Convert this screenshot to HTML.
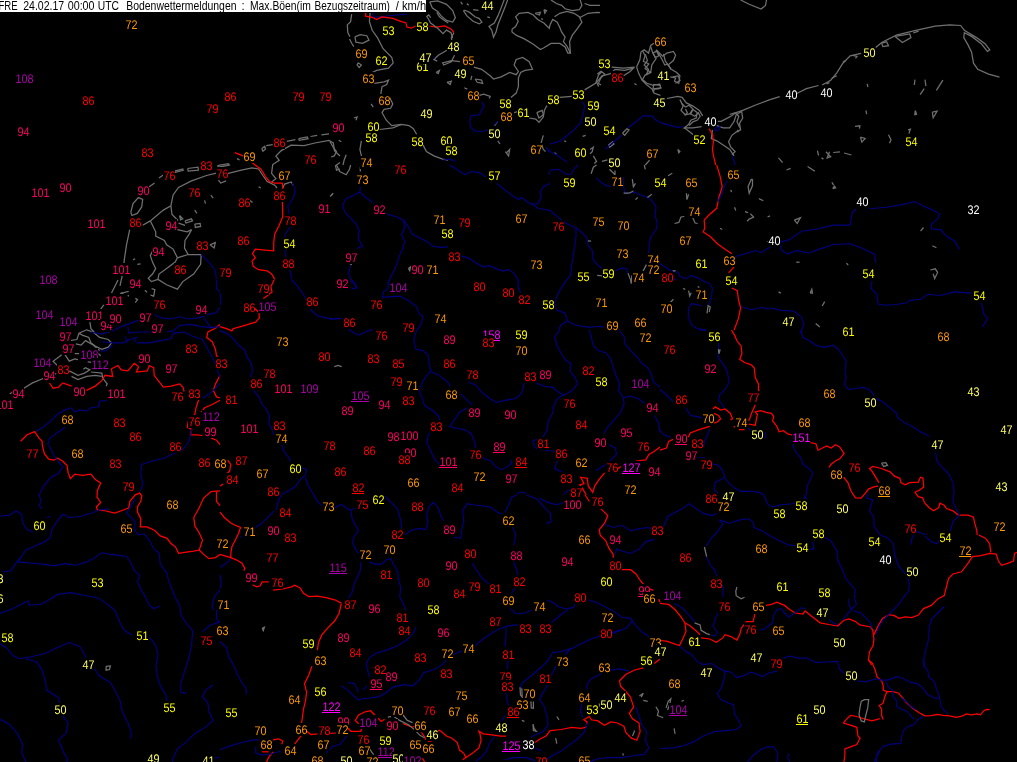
<!DOCTYPE html>
<html><head><meta charset="utf-8"><title>Bodenwettermeldungen</title>
<style>
html,body{margin:0;padding:0;background:#000;}
body{width:1017px;height:762px;overflow:hidden;position:relative;}
svg{position:absolute;left:0;top:0;display:block;will-change:transform;}
svg text{font-family:"Liberation Sans",Arial,sans-serif;font-size:12.5px;text-anchor:start;}
.c{fill:none;stroke:#707070;stroke-width:1.25;}
.b{fill:none;stroke:#ff0000;stroke-width:1.25;}
.r{fill:none;stroke:#000080;stroke-width:1.15;}
.k{fill:#000;}
</style></head><body>
<svg width="1017" height="762" viewBox="0 0 1017 762">
<rect width="1017" height="762" fill="#000"/>
<polyline class="c" points="130.8,212.3 133.0,203.6 138.4,197.6 142.7,199.3 141.7,206.9 137.3,213.4 131.9,215.5 130.8,212.3"/>
<polyline class="c" points="149.2,186.7 154.6,183.1"/>
<polyline class="c" points="159.0,178.1 163.3,175.0"/>
<polyline class="c" points="174.1,171.1 182.8,169.0 183.2,170.3 175.2,172.4 174.1,171.1"/>
<polyline class="c" points="187.6,168.5 198.0,167.2 198.4,170.1 188.2,171.1 187.6,168.5"/>
<polyline class="c" points="217.4,165.7 228.3,163.6 229.4,165.1 218.5,167.2 217.4,165.7"/>
<polyline class="c" points="236.9,158.6 239.5,159.9"/>
<polyline class="c" points="261.8,148.4 264.7,146.2 265.5,149.1 262.9,151.2 261.8,148.4"/>
<polyline class="c" points="266.2,145.6 272.7,144.7"/>
<polyline class="c" points="286.7,141.3 295.4,139.7"/>
<polyline class="c" points="298.6,138.7 307.3,136.9 308.0,138.7 299.3,140.4 298.6,138.7"/>
<polyline class="c" points="310.6,136.5 317.1,135.4"/>
<polyline class="c" points="321.4,134.8 329.0,133.9"/>
<polyline class="c" points="129.7,229.6 126.5,244.8 124.3,259.9 123.2,270.8 120.0,285.9"/>
<polyline class="c" points="142.7,225.3 150.3,220.9 163.3,210.1 170.9,205.8 173.1,195.0 178.5,187.4 191.5,180.9 206.6,175.5 215.3,173.3 228.3,173.3 241.3,170.1 252.1,167.9 258.6,169.0 262.9,175.5 267.2,181.5 274.8,185.2 277.0,188.0"/>
<polyline class="c" points="217.4,178.7 220.7,183.1 226.1,180.9"/>
<polyline class="c" points="282.8,188.0 284.6,184.1 291.1,182.0 293.2,185.2"/>
<polyline class="c" points="271.6,182.0 275.9,178.7 271.6,173.3 272.7,164.6 279.2,160.3 275.9,156.0 281.3,150.6 291.1,145.2 304.1,145.6 314.9,143.0 329.0,140.4 333.3,143.0 334.4,150.6 340.0,156.0"/>
<polyline class="c" points="340.0,162.5 335.5,165.7 336.5,170.1 340.0,169.0"/>
<polyline class="c" points="170.9,205.8 172.0,214.5 178.0,220.5"/>
<polyline class="c" points="191.5,229.6 189.3,233.9 185.0,240.4 184.5,248.0 188.2,254.5 201.2,254.5"/>
<polyline class="c" points="201.2,254.5 200.6,264.3 193.6,274.0 182.8,281.6 177.4,289.2 166.6,284.8 157.9,279.4 159.0,274.0 166.6,268.6 175.2,262.1 177.4,257.8 188.2,254.5"/>
<polyline class="c" points="150.3,220.9 155.7,231.8 155.7,236.1 164.4,240.4 166.6,244.8 173.1,249.1 177.4,257.8"/>
<polyline class="c" points="152.5,251.3 150.3,255.6 152.5,262.1 155.7,268.6 152.5,274.0 148.2,278.3 151.4,281.6 157.9,279.4"/>
<polyline class="c" points="179.5,215.5 182.8,218.8 180.6,219.9 179.5,215.5"/>
<polyline class="c" points="185.0,220.9 191.5,218.8 192.5,220.9 186.0,223.1 185.0,220.9"/>
<polyline class="c" points="194.7,224.2 200.1,223.5 200.6,226.4 195.4,227.4 194.7,224.2"/>
<polyline class="c" points="178.5,223.1 185.0,225.3"/>
<polyline class="c" points="177.4,229.6 187.1,231.8 191.5,229.6"/>
<polyline class="c" points="204.5,200.4 205.5,203.6"/>
<polyline class="c" points="210.9,195.0 213.1,198.2"/>
<polyline class="c" points="194.7,210.1 196.9,213.4"/>
<polyline class="c" points="209.9,244.8 215.3,242.6 214.2,248.0 209.9,244.8"/>
<polyline class="c" points="249.9,200.4 252.5,202.5"/>
<polyline class="c" points="258.6,186.7 260.8,188.0"/>
<polyline class="c" points="331.1,195.0 333.3,193.2"/>
<polyline class="c" points="133.0,259.9 135.2,258.8"/>
<polyline class="c" points="137.3,264.3 140.6,263.8"/>
<polyline class="c" points="120.0,293.5 128.7,291.3"/>
<polyline class="c" points="144.9,290.2 147.1,292.4"/>
<polyline class="b" points="234.8,152.7 242.3,155.6 253.2,163.6 260.8,169.0 265.5,176.6 269.4,181.5 274.8,183.1 282.4,183.1 282.8,188.5 282.4,202.5 282.8,216.6 279.2,225.3 274.8,233.9 273.7,242.6 273.7,250.8 265.1,250.2 255.3,249.1 252.5,253.4 255.3,257.8 252.1,261.0 253.2,266.4 258.6,269.7 267.2,270.8 271.6,274.0 274.8,279.4"/>
<polyline class="r" points="292.2,183.1 295.0,188.5 294.3,195.0 291.1,201.5 287.8,205.8 288.9,213.4 290.0,227.4 285.7,233.9 284.6,237.2 285.7,251.3 285.7,257.8 290.0,270.8 292.2,279.4"/>
<polyline class="r" points="201.2,254.5 206.6,259.9 210.9,264.3 215.3,270.8 216.4,279.4"/>
<polyline class="c" points="351.7,14.1 350.6,21.7 347.3,24.9 347.8,32.5 349.9,36.8"/>
<polyline class="c" points="354.9,36.8 360.3,34.6 366.8,35.7 369.0,40.1 362.5,43.3 356.0,42.2 354.9,36.8"/>
<polyline class="c" points="349.5,39.0 351.7,43.3 353.8,46.6"/>
<polyline class="c" points="358.2,62.8 361.4,65.0 359.2,67.6 357.1,65.0 358.2,62.8"/>
<polyline class="c" points="370.1,13.0 369.4,21.7 372.2,30.3 377.6,37.9 383.1,48.7 391.7,57.4 393.2,62.8 388.5,68.2 376.6,70.4 372.2,72.5"/>
<polyline class="c" points="374.4,83.4 384.1,81.9 388.5,80.1 386.7,84.5 382.0,86.6 380.9,93.1 382.0,96.4"/>
<polyline class="c" points="389.5,97.4 392.8,103.9 390.6,108.3 384.1,109.4 382.0,112.6 386.3,120.2 391.7,125.6 401.5,124.5 409.0,125.6 413.4,128.8 416.6,134.3"/>
<polyline class="c" points="379.8,129.5 392.8,127.8 401.5,124.5"/>
<polyline class="c" points="423.1,145.1 426.4,151.6 433.9,155.9 442.6,159.2 448.0,160.2"/>
<polyline class="c" points="361.4,140.8 359.9,149.4 361.4,155.9 362.5,159.2"/>
<polyline class="c" points="330.0,141.8 333.2,147.2 336.5,151.6 334.3,155.9 331.1,157.0"/>
<polyline class="c" points="346.2,154.8 344.1,160.2 343.0,165.0"/>
<polyline class="c" points="338.7,140.3 341.3,141.8"/>
<polyline class="c" points="453.9,32.5 451.3,37.9 452.3,42.2"/>
<polyline class="c" points="446.9,50.2 438.3,55.2 433.9,59.5 437.2,61.1"/>
<polyline class="c" points="454.5,55.2 451.3,61.7 443.7,65.0 442.6,62.8 451.3,60.6 459.9,61.7"/>
<polyline class="c" points="474.0,67.1 481.6,69.3 490.2,75.8 493.5,79.0 501.1,76.9 509.7,72.5 516.2,74.7 518.4,71.5 514.1,65.0 516.2,59.5 522.7,57.4 529.2,61.7 532.5,69.3 524.9,70.4 520.6,72.5 518.4,78.0 518.4,86.6 516.2,93.1 510.8,97.4"/>
<polyline class="c" points="497.8,121.3 494.6,125.6"/>
<polyline class="c" points="514.1,112.6 518.0,111.5"/>
<polyline class="c" points="529.2,118.0 535.7,119.1 539.0,122.3 543.3,116.9 544.4,110.4 546.5,106.1 550.0,103.9"/>
<polyline class="c" points="536.8,112.6 542.2,110.4 543.3,114.8 539.0,118.0 536.8,112.6"/>
<polyline class="c" points="464.3,87.7 468.6,89.9"/>
<polyline class="c" points="479.4,95.3 483.7,94.2 490.2,96.4 489.2,98.5"/>
<polyline class="c" points="471.8,75.8 470.8,80.1"/>
<polyline class="c" points="475.1,79.0 481.6,80.1 482.7,83.4 477.2,82.3 475.1,79.0"/>
<polyline class="c" points="436.1,72.5 439.4,70.4 438.3,73.6 436.1,72.5"/>
<polyline class="c" points="446.9,82.3 451.3,81.2 450.2,84.5 446.9,82.3"/>
<polyline class="c" points="543.3,135.3 541.1,142.9 543.3,149.4 545.5,151.6"/>
<polyline class="c" points="505.4,151.6 508.6,155.9 509.7,149.4 506.5,152.7"/>
<polyline class="c" points="497.8,140.8 500.0,144.0"/>
<polyline class="c" points="353.8,118.0 357.1,116.9 356.0,120.2"/>
<polyline class="c" points="371.1,103.9 373.3,107.2"/>
<polyline class="r" points="372.2,13.0 374.4,17.3 384.1,16.2 395.0,15.2 406.9,14.1"/>
<polyline class="b" points="365.7,13.0 365.7,16.2 372.2,17.3 376.6,19.5 382.0,16.9 392.8,18.4 401.5,21.7 405.8,22.7 406.9,27.1 411.2,28.2 415.5,26.0"/>
<polyline class="b" points="429.6,26.0 436.1,27.1 444.8,26.0 451.3,29.2 453.9,32.5"/>
<polyline class="r" points="481.6,101.8 484.2,106.1 481.6,110.4 479.4,114.8 470.8,115.9 469.7,121.3 470.8,127.8 475.1,131.0 481.6,131.7 488.1,129.9"/>
<polyline class="r" points="494.6,124.5 497.8,121.3"/>
<polyline class="r" points="433.9,58.5 435.0,56.7"/>
<polyline class="r" points="442.6,160.2 449.1,159.2 455.6,161.3"/>
<polyline class="r" points="546.5,147.2 548.7,151.6 550.0,149.4"/>
<polyline class="c" points="740.6,0.0 749.2,4.3 761.1,9.1 765.5,5.4 766.5,0.0"/>
<polyline class="c" points="559.7,97.4 571.7,96.4"/>
<polyline class="c" points="584.6,89.9 595.5,83.4 598.7,74.7 602.0,71.5"/>
<polyline class="c" points="611.7,67.1 623.6,68.2 634.5,67.1"/>
<polyline class="c" points="598.7,86.6 596.6,82.3 602.0,75.8 610.6,73.6 615.0,69.3 624.7,70.4 633.4,68.2"/>
<polyline class="c" points="623.6,75.8 630.1,71.5 634.5,67.1"/>
<polyline class="c" points="636.6,67.1 639.9,59.5 640.9,52.0 644.2,49.8 648.5,53.1 650.7,45.5 653.9,43.3"/>
<polyline class="c" points="656.1,49.8 662.6,56.3 666.9,53.1 673.4,51.5 675.6,55.2 673.4,60.6 668.0,65.0 671.3,69.3 676.7,72.5 679.9,75.8 678.8,83.4 674.5,81.2 675.6,78.0 670.2,76.9"/>
<polyline class="c" points="661.5,87.7 658.3,88.8 652.9,88.8 653.9,84.5 660.4,85.5"/>
<polyline class="c" points="636.6,67.1 638.8,73.6 642.0,80.1 646.4,84.5 651.8,88.8 653.9,93.1 660.4,95.3"/>
<polyline class="c" points="645.3,54.1 647.4,60.6 644.2,65.0 648.5,69.3 646.4,74.7 650.7,72.5 651.8,65.0 656.1,58.5 652.9,53.1 657.2,50.9 661.5,58.5 664.8,65.0 668.0,63.9"/>
<polyline class="c" points="666.9,98.5 677.8,96.4 682.1,97.4 686.4,102.9 692.9,106.1 699.4,110.4 702.7,115.9"/>
<polyline class="c" points="679.9,99.6 683.2,106.1 681.0,110.4 685.3,114.8 690.8,113.7 692.9,109.4 697.2,112.6 696.2,118.0 690.8,120.2 688.6,124.5 684.3,127.8 692.9,127.8 701.6,126.7"/>
<polyline class="c" points="684.3,127.8 688.6,131.0 694.0,135.3"/>
<polyline class="c" points="717.8,121.3 721.1,121.3 729.7,116.9 736.2,112.6 742.7,110.4 755.7,105.0 770.0,99.6"/>
<polyline class="c" points="716.7,125.6 723.2,127.8 729.7,127.8 734.1,121.3 736.2,114.8 741.6,111.5 742.7,118.0 739.5,123.4 740.6,129.9 736.2,132.1 731.9,135.3 728.6,141.8 730.8,147.2 735.1,151.6 731.9,154.8"/>
<polyline class="c" points="712.4,129.9 711.3,138.6 716.7,140.8 723.2,145.1 729.7,149.4 734.1,155.9"/>
<polyline class="c" points="677.8,149.4 679.9,151.6 678.8,152.7 677.8,149.4"/>
<polyline class="c" points="582.5,136.4 585.7,135.3"/>
<polyline class="c" points="564.1,140.8 566.2,141.8"/>
<polyline class="c" points="634.5,83.4 636.6,84.9"/>
<polyline class="c" points="737.3,129.9 738.4,132.1"/>
<polyline class="c" points="622.5,133.2 626.9,128.8 629.0,129.9 624.7,135.3 622.5,133.2"/>
<polyline class="c" points="608.5,145.1 612.8,141.8 613.9,144.0 609.5,147.2 608.5,145.1"/>
<polyline class="c" points="590.1,149.4 593.3,147.2 592.2,151.6 590.1,153.7"/>
<polyline class="c" points="593.3,155.9 596.6,161.3 594.4,163.5"/>
<polyline class="c" points="602.0,161.3 607.4,159.8"/>
<polyline class="c" points="554.3,152.7 556.5,153.7"/>
<polyline class="c" points="645.3,165.0 649.6,160.2"/>
<polyline class="r" points="582.5,101.8 584.6,106.1 583.6,112.6 580.3,123.4 573.8,129.9 567.3,135.3 560.8,140.8 554.3,142.9 550.0,144.0"/>
<polyline class="r" points="550.0,151.6 556.5,154.8 563.0,159.2 567.3,162.4"/>
<polyline class="r" points="605.2,149.4 615.0,140.8 621.5,135.3"/>
<polyline class="r" points="628.0,127.8 632.3,124.5 636.6,121.3 643.1,115.9 651.8,115.9 656.1,120.2 662.6,123.4 671.3,125.6 677.8,127.3 683.2,126.7"/>
<polyline class="r" points="714.6,127.8 720.0,126.7 718.9,129.9 715.7,131.0 714.6,127.8"/>
<polyline class="r" points="731.9,155.9 734.1,161.3 735.1,165.0"/>
<polyline class="b" points="709.2,128.8 712.4,134.3 713.5,140.8 712.4,149.4 713.5,155.9 715.7,165.0"/>
<polyline class="c" points="770.0,99.6 779.7,96.7"/>
<polyline class="c" points="796.7,93.5 806.4,88.7 818.6,85.5"/>
<polyline class="c" points="822.2,85.0 830.7,80.2 836.8,72.9 842.9,63.2 850.2,55.9 861.1,53.4"/>
<polyline class="c" points="875.7,47.4 881.7,42.5 896.3,35.2 915.7,30.4 935.2,26.2 949.7,25.0 960.7,25.5 964.3,30.4 976.5,37.6 985.0,43.7 989.8,49.8 987.4,51.5 981.3,43.7 971.6,36.4 964.3,32.8 963.8,37.6 968.0,44.9 971.6,52.2 973.5,63.2 977.7,69.2 988.6,74.1 999.5,77.2"/>
<polyline class="c" points="881.7,43.2 886.6,41.8 888.5,45.7 882.9,46.6 881.7,43.2"/>
<polyline class="c" points="895.1,36.4 909.7,34.0 910.9,37.6 902.4,42.5 895.1,36.4"/>
<polyline class="c" points="913.3,32.8 918.7,31.1"/>
<polyline class="c" points="852.6,55.4 857.0,56.4 855.5,58.3"/>
<polyline class="c" points="842.9,61.9 845.8,60.7"/>
<polyline class="c" points="831.9,78.2 836.8,75.8"/>
<polyline class="c" points="826.4,83.8 829.5,82.6"/>
<polyline class="c" points="867.2,83.8 867.9,87.0"/>
<polyline class="c" points="915.0,79.7 914.3,85.0"/>
<polyline class="c" points="925.0,79.7 925.9,86.2"/>
<polyline class="c" points="920.1,94.7 924.2,88.7"/>
<polyline class="c" points="936.4,90.4 942.9,80.2"/>
<polyline class="c" points="865.9,110.5 866.7,114.2"/>
<polyline class="c" points="915.3,110.5 916.5,114.2 914.8,114.6 915.3,110.5"/>
<polyline class="c" points="932.3,112.2 937.1,111.2 933.2,117.8 932.3,112.2"/>
<polyline class="c" points="855.0,126.3 859.9,125.8 859.4,128.7"/>
<polyline class="c" points="860.4,137.2 865.2,138.5 861.8,142.1 860.4,137.2"/>
<polyline class="c" points="888.5,134.8 891.0,139.7 889.5,143.3"/>
<polyline class="c" points="908.0,129.9 910.4,129.2 908.9,133.6"/>
<polyline class="c" points="817.4,150.6 818.6,155.5"/>
<polyline class="c" points="821.5,157.9 823.4,159.1"/>
<polyline class="c" points="825.9,151.8 830.7,156.7 827.1,157.9 829.5,151.8"/>
<polyline class="c" points="833.2,152.5 840.0,151.8"/>
<polyline class="c" points="844.1,153.0 851.4,155.0"/>
<polyline class="c" points="778.5,157.9 782.6,162.7"/>
<polyline class="c" points="786.5,170.0 790.6,168.3"/>
<polyline class="c" points="807.6,166.4 814.9,171.2"/>
<polyline class="c" points="831.9,182.2 833.6,185.1"/>
<polyline class="c" points="118.0,280.0 114.8,286.5 111.5,293.0"/>
<polyline class="c" points="103.9,304.9 100.7,309.2"/>
<polyline class="c" points="89.9,322.2 90.9,328.7 94.2,332.0"/>
<polyline class="c" points="69.3,340.6 76.9,339.5 79.0,333.1 86.6,329.8 93.1,332.0 99.6,337.4 108.3,339.5 111.5,342.8 108.3,347.1 101.8,349.3 95.3,346.0 90.9,342.8 88.8,337.4 82.3,335.2 79.0,333.1"/>
<polyline class="c" points="75.8,343.9 81.2,345.0 85.5,340.6 93.1,345.0 99.6,350.4"/>
<polyline class="c" points="61.7,354.7 53.1,361.2 58.5,366.6"/>
<polyline class="c" points="65.0,354.7 69.3,361.2 74.7,359.0 78.0,359.7"/>
<polyline class="c" points="74.7,353.6 79.0,353.6"/>
<polyline class="c" points="87.7,361.9 92.0,362.3"/>
<polyline class="c" points="69.3,370.9 78.0,375.3 84.5,373.1 89.9,369.9 85.5,367.7 83.4,369.2"/>
<polyline class="c" points="71.5,376.4 78.0,379.6 86.6,376.4 95.3,375.3 101.8,376.4"/>
<polyline class="c" points="90.9,372.0 101.8,373.1 102.9,378.5 107.2,383.9 106.1,386.1"/>
<polyline class="c" points="98.5,353.6 100.7,355.8"/>
<polyline class="c" points="56.3,373.5 43.3,378.5 32.5,382.9 23.8,388.3"/>
<polyline class="c" points="11.9,392.6 9.7,393.7"/>
<polyline class="c" points="151.6,288.7 154.8,289.7 153.7,296.2 150.5,295.2"/>
<polyline class="c" points="135.3,298.4 137.5,299.5 135.3,302.7"/>
<polyline class="c" points="121.3,292.6 123.4,294.1"/>
<polyline class="c" points="127.8,295.2 128.8,296.2"/>
<polyline class="b" points="49.4,382.9 53.1,388.3 58.5,387.2 62.8,382.9 71.5,386.1"/>
<polyline class="b" points="86.6,390.4 95.3,386.1 101.8,380.7 105.0,375.3 112.6,376.4 111.5,368.8 118.0,365.5 121.3,369.9 127.8,370.9 134.3,363.4 138.6,366.6 136.4,372.0 147.2,370.9 149.4,365.5 153.7,367.7 154.2,375.3 159.2,381.8 163.5,387.2 171.1,386.1 179.7,383.9 183.0,387.2 184.1,391.5"/>
<polyline class="b" points="199.2,398.0 196.0,407.8 194.9,414.3 188.4,420.8 187.3,427.2 191.6,429.4 190.6,434.8 197.1,434.8 202.5,435.5"/>
<polyline class="b" points="220.0,324.4 214.4,328.7 207.9,332.0 206.8,337.4 212.2,341.7 215.5,349.3 216.5,355.8 220.0,359.0"/>
<polyline class="b" points="220.0,375.3 215.5,383.9 213.3,390.4 216.5,396.9 220.0,398.0"/>
<polyline class="b" points="220.0,400.2 212.2,404.5 204.6,407.8 201.4,412.1"/>
<polyline class="b" points="20.6,441.3 27.1,434.8 34.6,431.6 39.0,438.1 42.2,441.3 42.2,445.0"/>
<polyline class="b" points="211.1,438.1 216.5,440.2 220.0,444.6"/>
<polyline class="r" points="216.5,280.0 216.5,288.7 220.0,291.9"/>
<polyline class="r" points="154.8,314.6 161.3,317.9 171.1,319.0 179.7,316.8 188.4,319.0 199.2,317.9 207.9,314.6 216.5,312.5 220.0,307.1"/>
<polyline class="r" points="203.6,317.9 207.9,323.3 211.1,327.6"/>
<polyline class="r" points="90.9,332.0 101.8,334.1 112.6,330.9 121.3,326.6 127.8,324.4 138.6,320.1"/>
<polyline class="r" points="127.8,326.6 128.8,333.1 138.6,332.0 151.6,332.0"/>
<polyline class="r" points="166.7,332.0 173.2,330.9 179.7,325.5 190.6,324.4 201.4,326.6 211.1,327.6 220.0,326.6"/>
<polyline class="r" points="101.8,341.7 112.6,342.8 123.4,342.8 129.9,339.5 136.4,337.4 134.3,341.7"/>
<polyline class="r" points="112.6,345.0 106.1,350.4 100.7,351.5"/>
<polyline class="r" points="125.6,336.3 126.7,341.7"/>
<polyline class="r" points="136.4,342.8 149.4,342.8 160.2,340.6 171.1,338.5 173.2,333.1 184.1,332.0 192.7,336.3 202.5,339.5 207.9,349.3 213.3,359.0 217.6,370.9 220.0,377.4"/>
<polyline class="r" points="220.0,383.9 213.3,390.4 207.9,394.8 202.5,398.0"/>
<polyline class="r" points="191.6,429.4 190.6,435.9 188.4,442.4 186.2,445.0"/>
<polyline class="r" points="107.2,400.2 99.6,401.3 98.5,406.7 90.9,407.8 86.6,411.0 80.1,409.9 74.7,412.1 71.5,407.8 65.0,409.9 57.4,414.3 50.9,420.8 43.3,427.2 35.7,431.6"/>
<polyline class="r" points="65.0,427.2 57.4,432.7 49.8,438.1 47.6,445.0"/>
<polyline class="b" points="274.1,280.0 270.9,286.5 272.0,291.9 266.6,296.2 263.3,298.4"/>
<polyline class="b" points="254.6,308.2 259.0,312.5 259.4,317.9 255.7,322.2 248.2,324.4 240.6,326.6 233.0,328.7 231.9,330.9 226.5,328.7 220.0,326.6"/>
<polyline class="r" points="220.0,330.9 226.5,333.1 233.0,338.5 238.4,345.0 244.9,350.4 247.1,356.9 251.4,363.4 252.5,370.9 250.3,377.4"/>
<polyline class="r" points="253.6,390.4 259.0,396.9 262.2,404.5 266.6,409.9 269.8,416.4 268.7,422.9 272.0,429.4 274.1,434.8"/>
<polyline class="r" points="220.0,293.0 221.1,301.7 220.0,304.9"/>
<polyline class="r" points="291.5,280.0 296.9,285.4 302.3,293.0 306.6,299.5"/>
<polyline class="r" points="309.9,309.2 317.4,315.7 326.1,317.9 334.8,319.0 342.3,318.5"/>
<polyline class="r" points="347.8,328.7 354.3,333.1 359.7,335.2 365.1,332.0 372.7,329.4"/>
<polyline class="r" points="352.1,280.0 355.3,284.3 356.4,288.2 352.5,288.7"/>
<polyline class="r" points="388.9,280.0 387.8,288.7 383.5,291.9 382.4,297.3 388.9,296.9 399.7,296.2 408.4,300.6 416.0,306.0 419.2,313.6 423.1,316.8 421.4,323.3 416.0,332.0 413.8,340.6 416.0,349.3 422.5,350.4 427.9,354.7 429.0,363.4 431.1,370.9 426.8,375.3 422.5,381.8 419.2,390.4 422.5,399.1 424.6,405.6 433.3,411.0 438.7,416.4 440.0,420.8"/>
<polyline class="r" points="431.1,372.0 436.5,374.2 440.0,375.3"/>
<polyline class="r" points="426.8,445.0 427.9,435.9 431.1,431.6"/>
<polyline class="c" points="334.3,366.6 338.0,365.5 341.7,366.6"/>
<polyline class="r" points="360.3,186.7 359.9,192.1 353.8,195.3 346.2,198.6 342.6,205.1 345.2,212.6 350.6,218.1 356.0,223.5 359.2,230.0 358.2,238.6 362.5,246.2 357.1,248.4"/>
<polyline class="r" points="350.6,265.7 348.4,273.3 351.7,281.9 356.0,285.2 356.0,288.4 351.2,288.4"/>
<polyline class="r" points="360.3,192.1 365.7,197.5 373.3,202.9"/>
<polyline class="r" points="386.3,213.7 397.1,217.0 403.6,220.2 409.0,227.8 412.3,234.3 420.9,238.6 427.4,241.9 432.9,246.2 440.4,247.3 448.0,246.9"/>
<polyline class="r" points="461.0,255.9 468.6,258.1 477.2,263.5 482.7,266.8 489.2,265.7 496.7,268.9 503.2,271.1 508.6,269.4 514.1,273.3 518.4,280.9 518.0,286.3 520.6,292.8"/>
<polyline class="r" points="403.6,220.2 404.7,227.8 401.5,234.3 404.7,241.9 402.5,249.5 399.3,255.9 397.1,263.5 393.9,271.1 390.6,277.6 387.4,284.1"/>
<polyline class="r" points="449.1,165.0 455.6,168.2 459.9,171.5 465.3,174.7 470.8,171.5 479.4,172.6 485.9,176.9"/>
<polyline class="r" points="496.7,183.4 503.2,188.8 511.9,195.3 518.4,199.6 521.6,197.5 527.1,201.8 533.6,205.1 537.9,208.3 550.0,210.5"/>
<polyline class="r" points="550.0,183.4 543.3,186.7 540.0,192.1 541.1,197.5 537.9,204.0 530.3,204.0"/>
<polyline class="r" points="548.7,171.5 550.0,174.7"/>
<polyline class="r" points="330.0,319.8 336.5,318.3 341.9,318.7"/>
<polyline class="c" points="336.5,165.0 339.7,171.5 346.2,174.7 349.5,169.3 350.6,165.0"/>
<polyline class="c" points="360.3,167.2 360.3,171.5"/>
<polyline class="c" points="330.0,196.4 332.6,194.2"/>
<polyline class="c" points="408.4,268.5 410.6,266.8 409.7,270.7 408.4,268.5"/>
<polyline class="c" points="349.9,263.5 351.7,265.0"/>
<polyline class="b" points="716.7,165.0 720.0,175.8 722.2,186.7 718.9,197.5 716.7,208.3 709.2,214.8 704.2,220.2 704.8,227.8 703.3,232.1 710.2,236.5 717.8,244.0 725.4,249.5 731.9,253.8"/>
<polyline class="b" points="734.1,266.8 728.6,272.8"/>
<polyline class="b" points="731.9,288.0 737.3,290.6 738.4,299.3 740.6,307.9 738.4,318.7 734.1,330.0"/>
<polyline class="r" points="729.7,174.7 725.4,184.5 721.1,195.3 717.8,201.8"/>
<polyline class="r" points="734.1,257.0 744.9,253.8 755.7,250.5 761.1,252.7 767.6,248.4 770.0,247.3"/>
<polyline class="r" points="741.6,306.8 751.4,309.7 761.1,307.5 770.0,309.0"/>
<polyline class="r" points="550.0,210.5 556.5,215.9 563.0,221.3 570.6,225.6 576.0,227.8 576.0,236.5 573.8,251.6 571.7,264.6 570.6,275.4 565.2,281.9 560.8,288.4 557.6,294.9 554.3,303.6 556.5,310.1 565.2,313.3 567.3,320.9 560.8,325.2 558.7,330.0"/>
<polyline class="r" points="576.0,227.8 581.4,232.1 586.8,237.5 587.9,245.1 592.2,250.5 593.3,260.3 598.7,265.7 603.1,268.9"/>
<polyline class="r" points="615.0,270.7 622.5,267.9 626.9,268.9 628.0,273.3"/>
<polyline class="r" points="550.0,170.4 558.7,169.3 565.2,173.7 570.6,174.7 573.8,169.3 578.2,165.0"/>
<polyline class="r" points="596.6,178.0 600.9,182.3 606.3,185.6 612.8,186.7"/>
<polyline class="r" points="623.6,176.9 623.6,186.7 624.7,193.2 634.5,192.1 640.9,195.3 648.5,197.5 652.9,201.8 656.1,207.2 655.0,214.8 657.2,223.5 656.1,230.0 650.7,236.5 649.2,245.1 648.5,253.8"/>
<polyline class="r" points="659.4,263.5 664.8,266.8 671.3,271.1 677.8,272.2 679.9,276.5 686.4,278.7 690.8,275.4 697.2,277.6 703.7,280.9 710.2,284.1 712.4,288.4 711.3,297.1 709.2,303.6 707.0,305.8"/>
<polyline class="r" points="701.6,305.8 691.8,303.6 688.6,307.9 688.2,316.6 691.8,325.2 697.2,328.5 705.9,330.0"/>
<polyline class="r" points="673.4,278.7 676.7,279.8"/>
<polyline class="r" points="567.3,320.9 576.0,325.2 589.0,327.4 599.8,326.3 604.1,327.4"/>
<polyline class="c" points="591.1,173.7 593.3,167.2 596.6,165.0"/>
<polyline class="c" points="609.5,169.3 615.0,174.7 615.0,170.4"/>
<polyline class="c" points="623.6,193.2 629.0,193.2 633.4,191.0"/>
<polyline class="c" points="632.3,179.1 633.4,186.7 635.5,183.4"/>
<polyline class="c" points="635.5,199.6 637.7,197.5"/>
<polyline class="c" points="647.4,197.5 651.8,194.2"/>
<polyline class="c" points="644.2,165.0 645.3,169.3"/>
<polyline class="c" points="668.0,175.8 672.3,173.2"/>
<polyline class="c" points="686.4,193.2 686.9,199.6 688.6,194.2"/>
<polyline class="c" points="674.5,223.5 678.8,222.4 681.0,217.0 684.3,216.5"/>
<polyline class="c" points="692.9,218.1 695.1,223.0 697.7,223.5"/>
<polyline class="c" points="751.4,179.1 748.1,186.7 749.2,193.2 752.5,185.6 752.5,179.7 751.4,179.1"/>
<polyline class="c" points="759.0,198.6 763.3,200.7"/>
<polyline class="c" points="734.5,207.2 735.8,210.5"/>
<polyline class="c" points="744.9,211.6 748.1,212.6"/>
<polyline class="c" points="750.3,213.7 753.6,217.0 749.2,219.1 747.1,221.3"/>
<polyline class="c" points="720.0,228.2 722.2,229.5"/>
<polyline class="c" points="730.8,189.9 731.5,192.1"/>
<polyline class="c" points="767.6,217.0 770.0,215.9"/>
<polyline class="c" points="767.6,241.9 770.0,239.7"/>
<polyline class="c" points="587.9,240.8 591.1,241.2"/>
<polyline class="c" points="597.2,275.4 602.0,275.9"/>
<polyline class="c" points="628.0,273.3 630.6,279.8 631.2,283.7 631.9,275.4"/>
<polyline class="c" points="643.1,271.1 646.4,264.6"/>
<polyline class="c" points="672.3,271.1 675.6,270.7"/>
<polyline class="c" points="683.2,288.4 685.3,289.5"/>
<polyline class="c" points="688.6,290.6 689.7,296.0 691.2,292.8"/>
<polyline class="c" points="697.7,286.7 699.4,287.3"/>
<polyline class="c" points="670.2,302.5 673.4,299.3"/>
<polyline class="c" points="707.0,313.3 708.1,305.8 710.2,306.8 709.2,312.2"/>
<polyline class="r" points="779.7,242.1 789.4,239.7 801.6,231.2 818.6,228.7 833.2,225.1 850.2,225.1 852.6,211.7 856.2,209.3"/>
<polyline class="r" points="869.6,208.8 886.6,207.3 903.6,204.4 914.5,201.5 925.5,206.9 935.2,211.2 940.0,214.1 937.6,219.0 931.5,223.9 931.5,228.7 941.2,229.9 946.1,236.0 954.6,240.9 959.5,249.4"/>
<polyline class="r" points="779.7,242.1 780.9,249.4 787.0,254.2 796.7,250.6 808.9,253.0 818.6,249.4 833.2,244.5 850.2,243.8 862.3,248.2 874.4,254.2 875.7,262.7"/>
<polyline class="r" points="872.0,280.9 870.8,288.2 876.9,294.3 878.1,304.0 884.2,305.2 896.3,304.5 907.2,302.8 909.7,300.4 920.6,299.2 927.9,294.3 940.0,295.5 954.6,291.9 971.6,293.1"/>
<polyline class="r" points="981.3,302.8 983.7,313.7 987.4,318.6 982.5,327.1"/>
<polyline class="r" points="770.0,307.7 779.7,310.1 794.3,311.3 801.6,317.4 804.0,323.5 800.4,333.2"/>
<polyline class="c" points="832.7,188.6 834.4,186.2 835.6,187.9 832.7,188.6"/>
<polyline class="c" points="794.3,220.2 800.4,217.8 797.2,223.4 794.3,220.2"/>
<polyline class="c" points="920.6,231.2 923.5,227.5"/>
<polyline class="c" points="932.3,245.7 936.4,247.7"/>
<polyline class="c" points="930.3,270.0 935.2,268.8 937.6,272.4 934.7,278.5 933.2,273.7"/>
<polyline class="c" points="796.2,262.2 799.6,262.2"/>
<polyline class="c" points="846.5,263.2 848.2,265.2"/>
<polyline class="c" points="778.5,291.9 780.9,293.1"/>
<polyline class="c" points="810.1,293.1 811.8,289.4 812.5,293.1 810.1,293.1"/>
<polyline class="c" points="822.2,306.0 824.7,301.6"/>
<polyline class="c" points="815.7,323.5 819.8,327.1 817.4,324.7"/>
<polyline class="r" points="560.2,330.0 554.8,336.5 556.9,345.2 561.3,353.8 565.6,360.3 571.0,363.6 569.9,371.1 575.3,377.6 577.5,384.1 572.1,390.6 564.5,395.0 561.3,396.0 556.9,399.3 553.7,405.8 552.6,413.4 548.3,420.9 547.2,429.6 542.9,437.2 538.5,439.4 533.1,440.4 534.2,445.9 537.4,449.1 546.1,450.2 554.8,451.3"/>
<polyline class="r" points="556.9,461.0 554.8,468.6 561.3,471.8 564.5,477.2"/>
<polyline class="r" points="569.9,489.2 565.6,492.4 563.4,495.0"/>
<polyline class="r" points="468.2,382.0 475.7,385.2 482.2,392.8 490.9,399.3 496.3,402.5 505.0,400.4 515.8,398.2 521.2,393.9 523.4,387.4 524.0,383.1"/>
<polyline class="r" points="536.4,383.1 543.9,386.3 552.6,387.4 558.0,391.7 563.4,395.0"/>
<polyline class="r" points="440.0,376.6 446.5,380.9 450.8,386.3"/>
<polyline class="r" points="460.6,393.9 467.1,400.4 472.5,404.7"/>
<polyline class="r" points="467.1,408.0 459.5,412.3 455.2,418.8 449.7,426.4 457.3,428.5 464.9,429.6 471.4,433.9 474.6,442.6 475.7,448.0"/>
<polyline class="r" points="482.2,457.8 490.9,461.0 495.2,466.4 501.7,469.7 508.2,466.4 511.5,463.2 511.0,459.9"/>
<polyline class="r" points="589.4,330.0 591.6,338.7 593.7,346.2 598.1,350.6 605.7,352.7 611.1,359.2 613.2,367.9 616.5,376.6 619.7,384.1 618.6,390.6 623.0,397.1 624.1,403.6 620.8,412.3 613.2,420.9 606.7,428.5 603.5,433.9"/>
<polyline class="r" points="608.9,444.8 615.4,448.0 616.5,454.5 611.1,459.9 604.6,465.3 599.2,468.6 595.9,470.8"/>
<polyline class="r" points="618.6,330.0 624.1,336.5 625.1,344.1 630.6,350.6 636.0,356.0 641.4,362.5 646.8,366.8 651.1,373.3 653.3,382.0 660.0,387.4"/>
<polyline class="r" points="624.1,397.6 630.6,396.0 639.2,399.3 644.6,403.6"/>
<polyline class="r" points="654.4,415.5 658.7,423.1 660.0,431.8"/>
<polyline class="r" points="516.9,493.5 522.3,492.0 526.6,493.5"/>
<polyline class="b" points="660.0,446.9 654.4,451.3 649.0,454.5 645.7,459.9 636.0,461.0"/>
<polyline class="b" points="620.8,466.4 616.5,469.7"/>
<polyline class="b" points="604.6,472.9 599.2,479.4 594.8,485.9 592.7,492.4 588.3,485.9 587.2,478.3 580.8,477.2 584.0,483.7 579.7,484.8 582.9,489.2 586.2,495.0"/>
<polyline class="b" points="731.5,330.0 734.7,335.4 736.9,340.8 741.2,346.2 741.9,353.8 739.7,359.2 744.5,362.5 750.9,364.6 754.2,367.9 755.3,377.6 758.5,384.1 758.5,391.7"/>
<polyline class="b" points="755.3,404.7 752.0,412.3 748.8,420.9"/>
<polyline class="b" points="713.1,409.0 715.2,406.9 720.6,410.1 725.0,409.0 730.4,413.4 732.5,418.8 730.4,419.9"/>
<polyline class="b" points="714.1,413.4 718.5,415.5 720.6,418.8 717.4,422.0 714.1,423.1"/>
<polyline class="b" points="748.8,424.2 755.3,425.3 756.4,418.8 757.4,414.5 755.3,411.9 760.7,410.6 766.1,412.3 771.5,413.4 773.7,416.6 772.6,420.9 776.9,426.4 779.1,431.8 783.4,430.7 787.8,433.9 792.1,435.0"/>
<polyline class="b" points="810.5,442.6 815.9,443.7 818.1,450.2 822.4,448.0 826.7,445.9 831.1,448.0 835.4,444.8 839.7,446.9 844.1,453.4 839.7,458.8 835.4,461.0 831.1,464.3 828.9,467.5"/>
<polyline class="b" points="709.8,426.4 699.0,429.6 690.3,432.9 688.2,437.2"/>
<polyline class="b" points="673.0,439.4 668.7,441.5 666.5,448.0 660.0,450.2"/>
<polyline class="b" points="739.0,429.6 744.5,429.6"/>
<polyline class="b" points="733.6,426.4 735.8,427.4"/>
<polyline class="r" points="718.5,343.0 718.5,349.5 718.0,357.1 722.8,363.6 727.1,371.1 729.3,382.0 725.0,389.5 719.5,395.0 718.5,400.4 722.8,404.7 723.9,408.0"/>
<polyline class="r" points="660.0,389.5 666.5,395.0 673.0,401.5"/>
<polyline class="r" points="686.0,408.0 690.3,415.5 697.9,416.6 703.3,418.3"/>
<polyline class="r" points="709.8,429.6 706.6,436.1 704.4,442.6 703.3,446.9"/>
<polyline class="r" points="699.0,457.8 705.5,457.8"/>
<polyline class="r" points="712.0,463.8 718.5,465.3 722.8,470.8 725.0,477.2 720.6,479.4 715.2,482.7 714.1,490.2 718.5,493.5"/>
<polyline class="r" points="725.0,478.3 729.3,483.7 734.7,488.1 741.2,491.3 750.9,491.3 759.6,492.4 763.9,495.0"/>
<polyline class="r" points="660.0,430.7 664.3,435.0 670.8,437.2"/>
<polyline class="r" points="747.7,428.5 750.9,429.6"/>
<polyline class="r" points="765.0,431.8 766.1,436.1 763.9,438.3"/>
<polyline class="r" points="800.8,330.0 802.9,337.6 809.4,340.8 815.9,345.2 824.6,347.3 833.2,345.2 838.6,349.5 843.0,356.0 846.2,361.4 845.1,371.1 846.2,378.7 844.1,384.1 848.4,389.5 856.0,388.5 863.6,387.4 869.0,389.5 873.3,393.9 874.4,397.1"/>
<polyline class="r" points="877.6,399.3 880.0,400.4"/>
<polyline class="r" points="792.1,443.7 795.3,451.3 800.8,457.8 802.9,464.3 809.4,468.6 812.7,472.9 810.5,479.4 807.2,485.9 806.2,495.0"/>
<polyline class="r" points="699.0,330.0 706.6,330.0"/>
<polyline class="c" points="718.5,349.1 718.9,353.8 720.2,349.5"/>
<polyline class="b" points="843.6,477.2 847.9,482.6 851.1,491.3 855.5,497.8 860.9,498.2 865.2,493.4 868.5,489.1 873.9,486.9 878.9,485.9"/>
<polyline class="b" points="878.9,482.6 875.0,476.1 871.7,470.7 869.5,468.5 872.8,466.4 881.5,468.5 890.1,471.8 894.4,476.1 899.9,478.3 900.9,482.6 905.3,484.8 909.6,482.6 918.3,482.2 920.4,477.2 923.0,478.3 923.7,486.9 919.3,490.2 915.0,492.3 918.3,496.7 922.6,497.8 924.8,503.2 929.1,507.5 933.4,510.8 938.8,507.5 939.9,503.2 944.2,505.3 946.4,508.6 952.9,510.8 958.3,515.1 968.1,515.1 973.5,517.2 974.6,522.7 976.7,530.2 977.2,535.0"/>
<polyline class="r" points="876.0,398.2 883.6,402.5 890.1,407.9 896.6,413.3 897.7,417.6 905.3,423.1 913.9,427.4 920.4,431.7 929.1,436.0"/>
<polyline class="r" points="935.6,452.3 936.7,460.9 942.1,467.4 948.6,473.9 952.9,482.6 954.0,491.3 952.9,502.1 957.2,510.8 959.4,515.1 952.9,521.6 950.7,530.2 949.7,535.0"/>
<polyline class="r" points="805.7,495.6 803.5,499.9"/>
<polyline class="r" points="868.5,493.4 866.3,497.8 872.8,499.9 869.5,510.8 873.9,517.2 873.9,525.9 878.2,532.4 880.4,535.0"/>
<polyline class="r" points="916.1,531.3 922.6,533.5 926.9,535.0"/>
<polyline class="c" points="881.5,463.1 885.8,462.7 887.5,465.3 883.6,466.4 881.5,463.1"/>
<polyline class="b" points="42.2,445.0 44.4,453.7 48.7,459.1 54.1,460.2 57.4,458.0 62.8,461.2 67.1,465.6 68.2,473.2 70.4,478.6 74.7,474.2 82.3,475.3 90.9,474.2 95.3,479.6 100.7,482.9 97.4,490.5 97.0,497.0 100.7,502.4 96.4,506.7 97.4,510.0 106.1,511.0 114.8,513.2 123.4,510.0 128.8,507.8 129.9,501.3 135.3,494.8 139.7,493.1 141.8,495.9 140.8,501.3 137.5,506.7 137.5,512.1 140.8,518.6 140.3,526.9 147.2,526.9 154.8,530.5 160.2,535.9 166.7,538.1 171.1,543.5 175.4,546.8 178.6,553.3 186.2,552.2 193.8,551.1 199.2,550.0"/>
<polyline class="b" points="220.0,490.9 211.1,491.6 203.6,498.1 199.2,507.8 193.8,517.5 194.9,526.2 199.2,532.7 202.5,540.3 199.2,550.0 203.6,554.4 209.0,558.7 215.5,557.6 220.0,554.4"/>
<polyline class="b" points="216.5,491.6 216.5,501.3 220.0,505.6"/>
<polyline class="r" points="186.2,445.0 181.9,450.4 173.2,453.7 164.6,458.0 151.6,461.2 141.8,464.5 140.8,473.2 142.9,484.0 139.7,491.6"/>
<polyline class="r" points="135.3,499.1 129.9,507.8 126.7,513.2 132.1,518.6 135.3,521.9 134.3,529.5 138.6,534.9 144.0,533.8 149.4,540.3 153.7,548.9 159.2,553.3 160.2,564.1 166.7,572.8 168.9,581.4 173.2,592.2 175.0,597.0"/>
<polyline class="r" points="48.7,445.0 53.1,453.7 56.3,459.1 62.8,466.7 58.5,473.2 50.9,477.5 44.4,485.1 39.0,494.8 41.1,501.3 39.0,505.6 42.2,508.9"/>
<polyline class="r" points="108.3,508.9 99.6,510.0 90.9,513.2 80.1,516.5 69.3,517.5 62.8,514.3 57.4,520.8 52.0,529.5 49.8,538.1 43.3,542.4 35.7,545.7 26.0,550.0 20.6,557.6 15.2,564.1 10.8,570.6 4.3,571.7 0.0,572.8"/>
<polyline class="r" points="20.6,557.6 18.4,561.9 30.3,563.0 43.3,564.1 54.1,565.8 65.0,563.7 75.8,565.2 86.6,561.9 95.3,557.6 101.8,552.8 110.4,554.4 119.1,555.4 126.7,556.5 131.0,563.0 134.3,570.6 139.7,574.9 137.5,581.4 140.8,589.0 145.1,596.6 149.4,605.2 153.7,608.5 160.2,606.3"/>
<polyline class="r" points="9.7,610.0 19.5,605.2 28.2,600.9 29.2,605.2 41.1,604.2 50.9,598.7 57.4,594.4 71.5,592.7 84.5,595.5 97.4,597.7 106.1,603.1 112.6,608.5 114.8,610.0"/>
<polyline class="r" points="0.0,516.0 8.7,515.4 16.2,511.0 21.7,514.3 22.7,523.0 27.1,529.5 32.5,531.6"/>
<polyline class="r" points="46.6,517.5 50.9,516.5"/>
<polyline class="r" points="220.0,590.1 214.4,596.6 212.2,605.2 213.3,610.0"/>
<polyline class="b" points="227.6,460.2 230.8,464.5 229.7,471.0 226.5,474.2"/>
<polyline class="b" points="223.2,484.0 220.0,486.1"/>
<polyline class="b" points="220.0,512.1 224.3,517.5 230.8,523.0 237.3,526.2 240.6,527.3 238.4,533.8 235.2,540.3 231.9,546.8 230.8,553.3 230.8,557.6 220.0,554.4"/>
<polyline class="b" points="230.8,557.6 236.2,559.8 241.7,563.0 244.9,568.4 243.8,570.6"/>
<polyline class="b" points="252.5,584.7 256.8,586.8 260.1,585.8 262.2,581.9 268.7,581.9"/>
<polyline class="b" points="273.1,590.1 282.8,589.0 291.5,586.8 294.7,585.3 300.1,587.9 303.4,593.3 308.8,596.6 317.4,596.1 326.1,597.7 334.8,599.8 341.3,603.1"/>
<polyline class="r" points="281.7,445.0 283.9,451.5 289.3,458.0 290.4,462.3"/>
<polyline class="r" points="301.9,467.7 306.6,469.9 305.5,475.3 300.1,479.6 295.8,486.1 289.3,490.5 282.8,493.7 279.5,498.1 277.4,504.5 276.3,510.0"/>
<polyline class="r" points="274.1,511.0 269.8,515.4 265.5,519.7 261.1,524.0 255.7,527.3"/>
<polyline class="r" points="241.7,535.9 239.5,537.0"/>
<polyline class="r" points="230.8,558.7 225.4,564.1 220.0,567.3"/>
<polyline class="r" points="305.5,477.5 307.7,485.1 313.1,493.7 317.4,501.3 321.8,505.6"/>
<polyline class="r" points="334.8,507.8 341.3,504.5 347.8,508.9 351.0,510.0 355.3,508.2"/>
<polyline class="r" points="351.0,510.0 352.1,518.6 355.3,525.1 358.6,530.5 354.3,535.9 352.5,542.4 355.3,548.9 358.6,553.3"/>
<polyline class="r" points="360.8,561.9 360.3,570.6 357.5,577.1 354.3,583.6 352.1,592.2 348.8,597.7 346.7,603.1"/>
<polyline class="r" points="384.6,495.9 391.1,502.4 397.6,508.9 399.7,516.5 401.5,524.0 400.8,530.5"/>
<polyline class="r" points="405.1,534.9 410.6,530.5 419.2,528.4 425.7,529.5 427.9,523.0 426.8,514.3 429.0,506.7 433.3,502.4 437.6,506.7 440.0,513.2"/>
<polyline class="r" points="369.4,561.9 374.8,564.1 381.3,564.1 386.7,559.8 391.1,558.7 393.2,564.1 397.6,570.6 398.6,579.3 400.8,587.9 399.7,596.6 403.0,603.1 406.2,610.0"/>
<polyline class="r" points="427.9,445.0 431.1,451.5 434.4,459.1 438.7,463.4 440.0,466.7"/>
<polyline class="r" points="220.0,574.9 221.1,583.6 220.0,589.0"/>
<polyline class="b" points="585.1,495.0 589.4,501.5"/>
<polyline class="b" points="601.3,509.1 607.8,515.6 604.6,523.2 599.2,529.6 600.2,535.1 605.7,540.5 608.9,548.1 613.2,554.5 613.2,557.8"/>
<polyline class="b" points="621.9,569.7 630.6,569.7 636.0,574.0 640.3,580.5 644.6,585.9"/>
<polyline class="b" points="647.9,588.1 653.3,590.3"/>
<polyline class="b" points="658.7,598.9 660.0,602.2"/>
<polyline class="r" points="503.9,514.5 497.4,512.3 489.8,506.9 481.1,505.8 472.5,504.7 467.1,503.7 462.7,510.2 463.8,521.0 461.7,529.6 460.6,538.3 454.1,537.2"/>
<polyline class="r" points="440.0,513.4 443.2,521.0"/>
<polyline class="r" points="505.0,512.3 509.3,503.7 511.5,497.2 516.9,495.0"/>
<polyline class="r" points="526.6,495.0 537.4,499.3 543.9,506.9 550.4,513.4 550.9,522.1 546.1,523.2"/>
<polyline class="r" points="539.6,498.2 548.3,502.6 556.9,504.7 563.4,502.6"/>
<polyline class="r" points="512.5,527.5 515.8,534.0 513.6,544.8"/>
<polyline class="r" points="513.6,562.1 516.9,569.7 518.0,575.1"/>
<polyline class="r" points="514.7,588.1 511.5,593.5"/>
<polyline class="r" points="472.5,563.2 476.8,570.8 482.2,578.4 488.7,583.8"/>
<polyline class="r" points="510.4,608.7 515.8,613.7 525.5,613.0 532.0,609.8"/>
<polyline class="r" points="547.2,600.0 552.6,602.2 558.0,606.5 565.6,608.7 573.2,607.6 575.3,604.4"/>
<polyline class="r" points="567.8,609.8 560.2,615.2 552.6,621.7 546.1,624.9 537.4,624.9"/>
<polyline class="r" points="518.0,624.9 507.1,626.0 498.5,629.3 487.6,635.8 479.0,642.2 475.7,645.5"/>
<polyline class="r" points="461.7,650.9 454.1,654.2"/>
<polyline class="r" points="506.0,626.0 506.0,635.8 505.0,646.6"/>
<polyline class="r" points="588.3,600.0 595.9,602.2 604.6,606.5 613.2,610.9 621.9,617.3 630.6,618.4 634.9,624.9 641.4,631.4 649.0,636.8 653.3,640.1"/>
<polyline class="r" points="632.7,620.6 626.2,628.2 617.6,631.4 613.2,633.6"/>
<polyline class="r" points="604.6,524.2 613.2,527.5 621.9,525.3 630.6,530.7 639.2,528.6 647.9,527.5 653.3,529.6"/>
<polyline class="r" points="654.4,539.4 645.7,541.6 639.2,549.1 630.6,553.5 623.0,551.3 616.5,549.1 615.4,554.5"/>
<polyline class="b" points="660.0,603.3 668.7,604.4 675.2,609.8 680.6,616.3 684.9,622.8 690.3,626.0 696.8,631.4 700.1,634.7"/>
<polyline class="b" points="684.9,622.8 686.0,631.4 682.7,639.0 679.5,645.5 673.0,643.3 666.5,641.2 660.0,640.5"/>
<polyline class="b" points="701.1,637.9 709.8,639.0 716.3,642.2 722.8,637.9 725.0,634.7 731.5,636.8 736.9,640.1 740.1,633.6 741.2,628.2 745.5,622.8"/>
<polyline class="b" points="745.5,621.7 753.1,621.7 754.8,614.1"/>
<polyline class="b" points="766.1,605.4 771.5,604.4 776.9,602.2 784.5,605.4 789.9,609.8 795.3,613.0 802.9,614.1 805.1,610.9 811.6,616.3 820.2,622.8 828.9,624.5 837.6,626.0"/>
<polyline class="r" points="660.0,530.7 664.3,525.3 667.6,516.7 673.0,513.4 681.7,509.1 689.2,503.7 696.8,509.1 703.3,513.4 712.0,515.6 716.7,513.4"/>
<polyline class="r" points="719.5,519.9 722.8,524.2 717.4,531.8 710.9,538.3 706.6,545.9"/>
<polyline class="r" points="706.6,556.7 709.8,564.3 715.2,570.8 716.7,576.2"/>
<polyline class="r" points="723.2,584.9 722.8,596.8"/>
<polyline class="r" points="718.5,611.9 715.2,618.4 713.1,626.0 717.4,632.5 715.2,635.8 710.9,635.3"/>
<polyline class="r" points="719.5,519.9 729.3,523.2 740.1,519.9 748.8,518.8 753.1,522.1 754.2,527.5 761.8,530.7 770.4,536.1 779.1,540.5 787.8,544.8 796.4,545.9"/>
<polyline class="r" points="809.4,549.1 813.7,549.1 812.7,541.6"/>
<polyline class="r" points="763.9,495.0 767.2,503.7 772.6,506.9 781.3,504.7 792.1,503.7 795.3,502.6"/>
<polyline class="r" points="804.0,495.0 807.2,499.3"/>
<polyline class="r" points="674.1,603.3 681.7,607.6 688.2,614.1 694.6,621.7"/>
<polyline class="r" points="759.6,630.3 763.9,629.3 768.3,626.0 772.6,622.8 773.7,615.2 776.9,609.8 781.3,608.7 784.5,613.0 788.8,617.3 796.4,611.9 801.8,607.6 805.1,608.7"/>
<polyline class="r" points="828.9,619.5 833.2,622.8 839.7,626.0"/>
<polyline class="c" points="704.4,547.0 705.9,553.5 706.6,556.7"/>
<polyline class="c" points="736.9,587.0 735.8,591.4 736.2,595.7 741.2,598.9 744.5,597.2"/>
<polyline class="c" points="694.6,622.8 700.1,624.9 701.1,630.3 706.6,633.6 709.8,634.7"/>
<polyline class="b" points="837.3,626.2 843.6,620.5 849.0,619.0 855.5,621.6 859.8,624.9 870.6,627.0 872.8,630.3 873.9,638.9 873.2,645.4 869.5,651.9 868.5,659.5 871.7,664.9"/>
<polyline class="b" points="873.9,634.6 878.2,625.9 882.5,618.4 889.0,614.7 894.4,615.6 898.8,618.4 905.3,616.9 911.8,617.7 918.3,615.1 923.7,608.6 931.3,605.4 937.8,598.9 944.2,595.6 946.4,587.0 948.6,578.3 952.9,574.0 961.6,571.8 968.1,563.2 972.4,556.7 981.1,555.6 989.7,553.4 996.2,554.1 998.4,561.0 1001.6,565.3 1008.1,563.2 1013.5,561.0 1014.6,553.4 1017.0,552.3"/>
<polyline class="b" points="978.9,535.0 985.4,538.2 989.7,543.7 990.8,552.3"/>
<polyline class="r" points="880.4,535.0 887.9,538.2 893.4,543.7 894.4,552.3 896.6,561.0 898.8,566.4 905.3,574.0"/>
<polyline class="r" points="907.4,577.2 909.6,583.7 908.5,591.3 903.1,597.8 898.8,604.3 890.1,613.0 883.6,619.5 879.3,625.9 876.0,634.6"/>
<polyline class="r" points="824.1,537.2 830.6,540.4 837.1,551.2 838.1,561.0 842.5,569.6 845.7,578.3 851.1,584.8 855.5,590.2 854.4,597.8 856.5,604.3 851.1,609.7 849.0,604.3 848.5,598.9"/>
<polyline class="r" points="851.1,609.7 845.7,616.2 842.5,620.5"/>
<polyline class="r" points="853.3,610.8 860.9,613.0 866.3,618.4 870.6,622.7 871.7,628.1"/>
<polyline class="r" points="944.2,606.5 937.8,613.0 931.3,619.5 929.1,628.1 928.7,638.9 925.8,649.8 923.7,659.5 924.8,667.1"/>
<polyline class="r" points="910.7,544.7 911.8,539.3 913.9,535.0"/>
<polyline class="r" points="924.8,536.1 931.3,541.5 936.7,543.7 939.9,539.3"/>
<polyline class="r" points="0.0,613.2 9.7,610.0"/>
<polyline class="r" points="114.8,610.0 120.2,623.0 124.5,630.6 132.1,634.9"/>
<polyline class="r" points="149.4,637.1 155.9,645.7 158.1,655.5 155.9,666.3 158.1,679.3 161.3,687.9 165.7,694.4 166.7,700.9"/>
<polyline class="r" points="0.0,643.6 6.5,647.9 13.0,655.5 19.5,658.7 32.5,656.5 45.5,653.3 56.3,647.9 69.3,642.5 80.1,646.8 84.5,654.4 86.6,658.7"/>
<polyline class="r" points="94.2,668.5 99.6,676.0 110.4,682.5 115.9,692.3 120.2,700.9 122.3,711.8 127.8,722.6 131.0,731.3 131.0,738.8"/>
<polyline class="r" points="26.0,658.7 36.8,662.0 42.2,670.6 45.5,681.5 46.6,690.1 55.2,695.5 58.5,697.7 59.5,703.1"/>
<polyline class="r" points="62.8,716.1 68.2,722.6 66.0,733.4 58.5,739.9 62.8,750.7 67.1,758.3 67.1,762.0"/>
<polyline class="r" points="0.0,719.3 8.7,723.7 17.3,733.4 22.7,744.2 21.7,752.9 26.0,762.0"/>
<polyline class="r" points="175.0,597.0 179.7,605.7 180.8,614.3 186.2,623.0 192.7,630.6 191.6,644.6 188.4,659.8 184.1,672.8 180.8,683.6 180.8,692.3 186.2,693.4"/>
<polyline class="r" points="213.3,684.7 205.7,690.1 202.5,696.6 207.9,703.1 209.0,711.8 213.3,720.4 205.7,726.9 194.9,733.4 186.2,742.1 177.6,748.6 173.2,758.3 172.2,762.0"/>
<polyline class="r" points="220.0,621.9 210.0,625.2 202.5,631.6"/>
<polyline class="r" points="213.3,758.3 220.0,757.2"/>
<polyline class="r" points="216.5,610.0 216.5,618.7 220.0,623.0"/>
<polyline class="c" points="106.1,666.3 110.4,665.9 109.4,669.5 106.1,670.2 106.1,666.3"/>
<polyline class="b" points="341.3,603.5 339.1,613.2 334.8,620.8 328.3,627.3 321.8,634.9 318.5,642.5 317.4,650.1"/>
<polyline class="b" points="312.0,666.3 308.8,675.0 304.5,683.6 306.6,692.3 305.5,700.9 303.4,709.6 302.3,718.3 301.2,724.8"/>
<polyline class="b" points="306.6,731.3 310.9,734.5 317.4,733.9"/>
<polyline class="b" points="330.4,733.4 335.9,733.0"/>
<polyline class="b" points="347.8,728.0 351.0,731.3 360.8,731.3 361.8,728.0"/>
<polyline class="b" points="358.6,723.7 355.3,720.4 358.6,715.0 365.1,711.8 370.5,710.7 374.8,715.0"/>
<polyline class="b" points="378.1,718.3 381.3,721.5 384.6,719.3"/>
<polyline class="b" points="301.2,735.6 296.9,741.0 294.7,744.2"/>
<polyline class="b" points="273.1,739.9 278.5,738.8 282.8,741.0 281.7,744.2"/>
<polyline class="b" points="262.2,751.8 268.7,751.8"/>
<polyline class="b" points="273.1,751.8 268.7,757.2 266.6,762.0"/>
<polyline class="b" points="403.0,723.7 410.6,726.5 414.9,726.9"/>
<polyline class="b" points="421.4,732.3 424.6,736.7 425.7,739.9"/>
<polyline class="b" points="427.9,741.7 432.2,742.1"/>
<polyline class="b" points="422.5,758.3 424.6,762.0"/>
<polyline class="b" points="436.5,731.3 440.0,730.2"/>
<polyline class="r" points="220.0,641.4 226.5,647.9 228.7,656.5 233.0,664.1 237.3,673.9 241.7,682.5 246.0,687.9 246.4,694.4"/>
<polyline class="r" points="416.0,627.3 412.7,633.8 406.2,640.3 397.6,645.7 386.7,650.1 375.9,653.3 369.4,657.6 366.2,664.1 368.3,672.8 369.4,677.1"/>
<polyline class="r" points="362.9,690.1 367.2,685.8"/>
<polyline class="r" points="341.3,685.8 347.8,690.1 353.2,695.5 358.6,699.9 362.9,698.8 371.6,697.7 379.2,696.6 386.7,692.3 393.2,686.9 404.1,684.7 412.7,685.8 419.2,680.4 423.6,672.8 434.4,669.5 440.0,666.3"/>
<polyline class="r" points="347.8,682.5 354.3,683.6 358.6,692.3"/>
<polyline class="r" points="220.0,749.7 228.7,746.4 239.5,743.2 252.5,739.9 259.0,739.9"/>
<polyline class="r" points="255.7,746.4 255.7,752.9 261.1,755.1 270.9,754.0 278.5,751.8 280.6,750.7"/>
<polyline class="r" points="326.1,752.9 332.6,746.4 340.2,744.2 344.5,738.8 346.7,735.6"/>
<polyline class="c" points="262.2,628.4 264.4,627.3 263.3,630.6 262.2,628.4"/>
<polyline class="c" points="387.8,717.2 393.2,716.1 399.7,720.4 408.4,724.8 413.8,729.1 420.3,735.6 424.6,737.8"/>
<polyline class="c" points="403.0,715.0 407.3,720.4 412.7,722.6"/>
<polyline class="c" points="369.4,748.6 371.6,751.8 373.7,754.6"/>
<polyline class="c" points="342.3,754.6 343.9,756.2"/>
<polyline class="b" points="440.0,730.6 446.5,736.0 451.9,738.2 457.3,742.5 459.5,750.1 463.8,753.3 466.0,757.6 462.7,759.8"/>
<polyline class="b" points="466.0,757.6 472.4,753.3 478.9,747.9 481.1,740.3 480.0,733.8 478.9,731.2 483.3,733.8 491.9,734.9 500.6,736.0 506.0,736.0"/>
<polyline class="b" points="535.2,742.5 539.5,739.2 546.0,736.0 550.3,730.6 561.1,729.5 571.9,727.3 580.6,728.4 586.0,727.3 587.1,721.9 583.8,719.8 589.3,716.5 591.4,719.8 597.9,720.9 604.4,725.2 610.9,721.9 617.4,723.0 623.9,726.3 626.0,732.7 631.4,738.2 636.8,740.3 640.1,731.7 639.0,723.0 632.5,718.7 629.3,713.3 633.6,706.8 630.4,697.1 626.0,691.6 620.6,686.2 619.5,680.8 626.0,674.3 634.7,670.0 643.3,667.9"/>
<polyline class="b" points="654.1,663.5 659.8,659.2"/>
<polyline class="r" points="454.1,653.8 447.6,659.2 442.2,664.6 440.0,665.7"/>
<polyline class="r" points="508.1,660.3 507.5,668.9"/>
<polyline class="r" points="506.0,692.7 507.1,701.4 509.2,705.7"/>
<polyline class="r" points="504.9,715.4 501.6,720.9"/>
<polyline class="r" points="495.2,736.0 489.8,742.5 486.5,751.1 481.1,757.6 475.7,760.9"/>
<polyline class="r" points="619.5,630.0 610.9,633.2 602.2,635.4 591.4,638.7 582.8,643.0 571.9,648.4 561.1,651.6 552.5,652.7 548.2,660.3 541.7,666.8 535.2,672.2 527.6,678.7 522.2,683.0 520.0,689.5"/>
<polyline class="r" points="569.8,649.5 556.8,664.6 551.4,675.4"/>
<polyline class="r" points="548.2,684.1 541.7,694.9 539.5,699.2 543.8,705.7 547.1,716.5 548.2,725.2 542.7,731.7 535.2,734.9 530.9,737.1"/>
<polyline class="r" points="535.2,747.9 541.7,751.1"/>
<polyline class="r" points="629.3,671.1 619.5,668.9 610.9,670.0 600.1,674.3 591.4,678.7 587.1,684.1 587.1,689.5"/>
<polyline class="r" points="581.7,703.5 580.6,712.2 582.8,717.6"/>
<polyline class="r" points="587.1,723.0 584.9,731.7 578.4,738.2 569.8,744.6 561.1,751.1 552.5,755.5 546.0,759.8"/>
<polyline class="r" points="635.8,706.8 639.0,716.5 642.2,725.2 646.6,731.7 645.5,740.3 648.7,747.9 644.4,754.4 634.7,755.5 621.7,757.6 608.7,757.6 597.9,758.7 589.3,761.9"/>
<polyline class="r" points="504.9,759.8 513.5,757.6 526.5,757.6 535.2,760.9"/>
<polyline class="c" points="520.0,687.3 520.5,694.9 522.2,697.1 521.8,688.4"/>
<polyline class="c" points="530.9,701.4 531.3,707.9 533.4,708.3 533.4,701.4"/>
<polyline class="c" points="521.8,720.4 524.4,721.3"/>
<polyline class="c" points="533.0,724.1 533.4,730.6 536.3,731.2 534.1,728.4 533.0,724.1"/>
<polyline class="c" points="556.8,716.5 559.0,719.8"/>
<polyline class="c" points="555.7,738.2 556.8,743.6"/>
<polyline class="c" points="639.4,696.0 643.3,693.2 641.2,697.1"/>
<polyline class="c" points="643.3,700.3 647.7,701.4"/>
<polyline class="c" points="655.9,706.8 658.5,711.1 657.4,715.4 659.8,716.5"/>
<polyline class="c" points="632.5,736.0 634.7,730.6"/>
<polyline class="c" points="622.8,753.3 623.4,755.5"/>
<polyline class="c" points="599.0,703.5 600.1,706.8"/>
<polyline class="b" points="879.8,718.7 872.0,720.9 863.3,718.7 856.8,716.5 850.4,715.4 846.0,719.8 843.4,723.0 850.4,725.2 856.8,727.3 857.9,736.0 860.1,738.2 856.8,744.6 850.4,746.8 844.9,749.0 844.9,755.5 843.9,761.9"/>
<polyline class="r" points="679.5,646.2 686.0,651.6 692.4,654.9 696.8,661.4 703.3,664.6 711.9,663.5 718.4,667.9 724.9,671.1 731.4,672.2 736.8,677.6 744.4,675.4 750.9,672.2 757.3,674.3 762.7,676.5 768.2,673.3 776.8,671.1"/>
<polyline class="r" points="783.3,658.1 789.8,656.0 798.4,658.1 807.1,658.1 815.7,662.4 826.6,662.0 837.4,661.4 839.5,668.9 843.9,673.3"/>
<polyline class="r" points="856.8,680.8 865.5,681.9 876.3,678.7"/>
<polyline class="r" points="724.9,671.1 723.8,679.8 721.6,687.3 717.3,693.8 720.6,699.2 727.1,702.5 733.5,704.6 734.6,714.4 739.0,720.9 741.1,726.3 735.7,729.5 724.9,730.6 714.1,731.7 703.3,736.0 694.6,741.4 683.8,745.7 673.0,747.9 660.0,748.5"/>
<polyline class="r" points="747.6,761.9 753.0,755.5 761.7,749.0 768.2,746.8 773.6,746.8 777.9,753.3 776.8,761.9"/>
<polyline class="r" points="788.7,753.3 787.6,757.6 789.8,761.9"/>
<polyline class="r" points="879.8,751.1 876.3,757.6 876.3,761.9"/>
<polyline class="c" points="861.2,701.4 864.4,699.7 868.7,699.7 867.7,707.9 865.5,716.5 864.4,721.9 861.2,720.9 859.0,714.4 860.1,706.8 861.2,701.4"/>
<polyline class="c" points="666.1,707.9 668.2,701.4 670.8,698.8 669.7,704.6 667.6,710.0"/>
<polyline class="c" points="681.6,701.4 683.8,700.3"/>
<polyline class="c" points="660.0,716.5 663.2,717.6"/>
<polyline class="c" points="674.1,728.4 675.1,733.8"/>
<polyline class="b" points="868.5,660.0 872.3,663.1 875.4,670.8 877.0,677.0 881.6,680.8 883.2,685.5 883.2,690.1 887.0,691.6 893.2,691.6 898.6,693.2 902.5,697.8 906.3,702.5 912.5,707.9 918.7,712.5 924.8,715.9 931.0,715.6 937.2,714.3 943.4,715.3 949.5,715.9 956.5,717.4 962.7,715.9 966.5,714.0 971.1,714.8 977.3,714.0 980.4,714.8 983.5,710.9 986.6,709.4 989.7,709.7"/>
<polyline class="b" points="887.0,691.6 884.7,697.0 883.2,703.2 879.3,705.5 881.6,709.4 881.6,715.6 883.2,719.4"/>
<polyline class="r" points="875.4,678.5 881.6,680.1 887.8,680.1 897.0,676.7 903.2,678.5 910.9,682.4 917.9,683.9 923.3,688.6 927.9,694.7 934.1,697.8 938.7,698.6"/>
<polyline class="r" points="923.3,660.0 924.1,666.2 927.9,670.8 928.7,677.0 934.1,681.6 937.2,690.9 939.5,697.0 941.0,706.3 944.9,710.9 948.0,714.3"/>
<polyline class="r" points="886.2,681.6 887.8,686.2 892.4,690.1 893.2,696.3 897.0,701.7 896.3,706.3 901.7,709.4 906.3,710.9 910.2,714.8 914.0,719.4"/>
<polyline class="r" points="900.9,697.8 906.3,701.7 910.9,706.3 915.6,709.4"/>
<polyline class="r" points="923.3,716.3 917.9,719.4 914.0,724.8 907.9,726.4 903.2,731.0 901.7,737.2 900.9,743.4 890.9,744.1 883.2,746.4 877.8,752.6 874.7,762.0"/>
<polyline class="c" points="429.7,1.8 437.7,0.9 446.5,4.4 452.7,10.6 455.4,17.7 452.7,22.1 446.5,20.4 441.2,15.9 437.7,11.5 432.4,8.0 429.7,1.8"/>
<polyline class="c" points="436.8,12.4 439.5,16.8 443.0,19.5 448.3,23.0"/>
<polyline class="c" points="427.1,16.8 430.6,23.0 437.7,28.3 443.0,33.6 446.5,30.1 451.0,32.7 452.7,38.1"/>
<polyline class="c" points="426.2,16.8 428.8,15.0 430.6,17.7"/>
<polyline class="c" points="463.4,10.6 466.9,15.9 473.1,21.2 479.3,23.9 481.9,22.1 479.3,18.6 474.9,16.8 469.6,12.4 465.1,10.3 463.4,10.6"/>
<polyline class="c" points="473.1,9.7 478.4,10.3"/>
<polyline class="c" points="460.7,1.8 462.5,4.4"/>
<polyline class="c" points="466.9,3.5 468.7,5.3"/>
<polyline class="c" points="487.3,16.8 489.9,17.7"/>
<polyline class="c" points="504.1,0.0 501.4,7.1 497.9,15.9 494.3,23.0 489.0,26.5 491.7,30.1 493.5,37.2 496.1,31.9 497.9,24.8 501.4,15.9 505.0,7.1 507.6,0.0"/>
<polyline class="c" points="512.0,29.2 515.6,26.5 518.2,21.2 515.6,16.8 519.1,13.3 528.0,12.4 533.3,15.0 537.7,19.5 543.9,23.0 549.2,28.3 550.1,24.8 552.7,19.5 557.2,22.1 559.8,27.4 561.6,31.9 565.1,37.2 563.4,41.6 566.9,46.0 570.4,53.1 567.8,53.1 565.1,46.9 559.8,43.4 551.0,43.4 543.9,47.8 540.4,49.6 533.3,44.2 524.4,38.9 516.5,35.4 512.0,31.9 512.0,29.2"/>
<polyline class="c" points="554.5,16.8 559.8,13.3 566.9,11.5 574.0,13.3 579.3,16.8 581.9,22.1 577.5,28.3 572.2,35.4 569.6,41.6 570.4,53.1"/>
<polyline class="c" points="579.3,17.7 588.1,13.3 597.0,12.4 600.0,12.7"/>
<polyline class="c" points="551.0,0.0 556.3,3.5 561.6,5.3 565.1,8.8 572.2,10.6 579.3,9.7 581.9,5.3 580.2,0.0"/>
<polyline class="c" points="584.6,3.5 589.9,5.3 600.0,5.3"/>
<polyline class="c" points="535.0,13.3 540.4,12.4 539.5,15.0 535.0,13.3"/>
<polyline class="c" points="543.9,9.7 546.5,10.6 544.8,13.3 543.9,9.7"/>
<polyline class="c" points="541.2,18.6 543.0,19.5"/>
<polyline class="c" points="642.4,50.2 645.1,55.7 643.3,61.2 648.8,64.0 645.1,68.6 650.6,72.2 645.1,75.0 642.4,79.6 646.9,83.3 652.5,85.1 659.8,84.2 660.7,87.9 654.3,88.8 653.4,92.5"/>
<polyline class="c" points="650.6,46.5 652.5,52.0 655.2,57.6 658.9,55.7 656.1,50.2"/>
<polyline class="c" points="663.5,53.9 665.3,61.2 669.0,65.8 670.8,69.5"/>
<polyline class="c" points="672.7,76.8 678.2,75.9 680.0,80.5 675.4,83.3"/>
<polyline class="c" points="681.8,103.5 685.5,107.1 689.2,105.3 692.9,109.0 690.1,113.6 694.7,116.3 698.4,112.7 700.2,116.3 697.5,120.0 692.9,121.8 689.2,125.5"/>
<polyline class="c" points="685.5,109.0 687.4,112.7 684.6,115.4"/>
<polyline class="c" points="597.3,74.1 601.0,71.3 604.7,74.1 601.0,77.8 598.3,83.3 601.0,85.1"/>
<polyline class="c" points="729.6,114.5 735.1,112.7 738.8,116.3 737.0,121.8 739.7,127.4"/>
<g text-rendering="geometricPrecision" shape-rendering="crispEdges" style="opacity:0.999">
<rect class="k" x="125" y="18" width="12" height="13"/><text transform="translate(125.5,29) scale(0.863,1)" fill="#ff9900">72</text>
<rect class="k" x="15" y="72" width="18" height="13"/><text transform="translate(15.5,83) scale(0.863,1)" fill="#aa00aa">108</text>
<rect class="k" x="82" y="94" width="12" height="13"/><text transform="translate(82.5,105) scale(0.863,1)" fill="#ff0000">86</text>
<rect class="k" x="224" y="90" width="12" height="13"/><text transform="translate(224.5,101) scale(0.863,1)" fill="#ff0000">86</text>
<rect class="k" x="206" y="102" width="12" height="13"/><text transform="translate(206.5,113) scale(0.863,1)" fill="#ff0000">79</text>
<rect class="k" x="292" y="90" width="12" height="13"/><text transform="translate(292.5,101) scale(0.863,1)" fill="#ff0000">79</text>
<rect class="k" x="319" y="90" width="12" height="13"/><text transform="translate(319.5,101) scale(0.863,1)" fill="#ff0000">79</text>
<rect class="k" x="17" y="125" width="12" height="13"/><text transform="translate(17.5,136) scale(0.863,1)" fill="#ff0066">94</text>
<rect class="k" x="332" y="121" width="12" height="13"/><text transform="translate(332.5,132) scale(0.863,1)" fill="#ff0066">90</text>
<rect class="k" x="141" y="146" width="12" height="13"/><text transform="translate(141.5,157) scale(0.863,1)" fill="#ff0000">83</text>
<rect class="k" x="273" y="136" width="12" height="13"/><text transform="translate(273.5,147) scale(0.863,1)" fill="#ff0000">86</text>
<rect class="k" x="243" y="150" width="12" height="13"/><text transform="translate(243.5,161) scale(0.863,1)" fill="#ff9900">69</text>
<rect class="k" x="304" y="153" width="12" height="13"/><text transform="translate(304.5,164) scale(0.863,1)" fill="#ff0000">76</text>
<rect class="k" x="200" y="159" width="12" height="13"/><text transform="translate(200.5,170) scale(0.863,1)" fill="#ff0000">83</text>
<rect class="k" x="163" y="169" width="12" height="13"/><text transform="translate(163.5,180) scale(0.863,1)" fill="#ff0000">76</text>
<rect class="k" x="216" y="167" width="12" height="13"/><text transform="translate(216.5,178) scale(0.863,1)" fill="#ff0000">76</text>
<rect class="k" x="278" y="169" width="12" height="13"/><text transform="translate(278.5,180) scale(0.863,1)" fill="#ff9900">67</text>
<rect class="k" x="31" y="186" width="18" height="13"/><text transform="translate(31.5,197) scale(0.863,1)" fill="#ff0066">101</text>
<rect class="k" x="59" y="181" width="12" height="13"/><text transform="translate(59.5,192) scale(0.863,1)" fill="#ff0066">90</text>
<rect class="k" x="137" y="184" width="12" height="13"/><text transform="translate(137.5,195) scale(0.863,1)" fill="#ff0066">90</text>
<rect class="k" x="188" y="186" width="12" height="13"/><text transform="translate(188.5,197) scale(0.863,1)" fill="#ff0000">76</text>
<rect class="k" x="273" y="189" width="12" height="13"/><text transform="translate(273.5,200) scale(0.863,1)" fill="#ff0000">86</text>
<rect class="k" x="238" y="196" width="12" height="13"/><text transform="translate(238.5,207) scale(0.863,1)" fill="#ff0000">86</text>
<rect class="k" x="318" y="202" width="12" height="13"/><text transform="translate(318.5,213) scale(0.863,1)" fill="#ff0066">91</text>
<rect class="k" x="87" y="217" width="18" height="13"/><text transform="translate(87.5,228) scale(0.863,1)" fill="#ff0066">101</text>
<rect class="k" x="129" y="216" width="12" height="13"/><text transform="translate(129.5,227) scale(0.863,1)" fill="#ff0000">86</text>
<rect class="k" x="165" y="219" width="12" height="13"/><text transform="translate(165.5,230) scale(0.863,1)" fill="#ff0066">94</text>
<rect class="k" x="284" y="214" width="12" height="13"/><text transform="translate(284.5,225) scale(0.863,1)" fill="#ff0000">78</text>
<rect class="k" x="237" y="234" width="12" height="13"/><text transform="translate(237.5,245) scale(0.863,1)" fill="#ff0000">86</text>
<rect class="k" x="196" y="239" width="12" height="13"/><text transform="translate(196.5,250) scale(0.863,1)" fill="#ff0000">83</text>
<rect class="k" x="283" y="237" width="12" height="13"/><text transform="translate(283.5,248) scale(0.863,1)" fill="#ffff00">54</text>
<rect class="k" x="152" y="245" width="12" height="13"/><text transform="translate(152.5,256) scale(0.863,1)" fill="#ff0066">94</text>
<rect class="k" x="481" y="-1" width="12" height="13"/><text transform="translate(481.5,10) scale(0.863,1)" fill="#ffff66">44</text>
<rect class="k" x="382" y="24" width="12" height="13"/><text transform="translate(382.5,35) scale(0.863,1)" fill="#ffff00">53</text>
<rect class="k" x="416" y="20" width="12" height="13"/><text transform="translate(416.5,31) scale(0.863,1)" fill="#ffff00">58</text>
<rect class="k" x="447" y="40" width="12" height="13"/><text transform="translate(447.5,51) scale(0.863,1)" fill="#ffff66">48</text>
<rect class="k" x="355" y="47" width="12" height="13"/><text transform="translate(355.5,58) scale(0.863,1)" fill="#ff9900">69</text>
<rect class="k" x="375" y="54" width="12" height="13"/><text transform="translate(375.5,65) scale(0.863,1)" fill="#ffff00">62</text>
<rect class="k" x="416" y="60" width="12" height="13"/><text transform="translate(416.5,71) scale(0.863,1)" fill="#ffff00">61</text>
<rect class="k" x="419" y="51" width="12" height="13"/><text transform="translate(419.5,62) scale(0.863,1)" fill="#ffff66">47</text>
<rect class="k" x="462" y="54" width="12" height="13"/><text transform="translate(462.5,65) scale(0.863,1)" fill="#ff9900">65</text>
<rect class="k" x="454" y="67" width="12" height="13"/><text transform="translate(454.5,78) scale(0.863,1)" fill="#ffff66">49</text>
<rect class="k" x="362" y="72" width="12" height="13"/><text transform="translate(362.5,83) scale(0.863,1)" fill="#ff9900">63</text>
<rect class="k" x="378" y="94" width="12" height="13"/><text transform="translate(378.5,105) scale(0.863,1)" fill="#ff9900">68</text>
<rect class="k" x="467" y="89" width="12" height="13"/><text transform="translate(467.5,100) scale(0.863,1)" fill="#ff9900">68</text>
<rect class="k" x="420" y="107" width="12" height="13"/><text transform="translate(420.5,118) scale(0.863,1)" fill="#ffff66">49</text>
<rect class="k" x="499" y="97" width="12" height="13"/><text transform="translate(499.5,108) scale(0.863,1)" fill="#ffff00">58</text>
<rect class="k" x="517" y="106" width="12" height="13"/><text transform="translate(517.5,117) scale(0.863,1)" fill="#ffff00">61</text>
<rect class="k" x="500" y="110" width="12" height="13"/><text transform="translate(500.5,121) scale(0.863,1)" fill="#ff9900">68</text>
<rect class="k" x="547" y="93" width="12" height="13"/><text transform="translate(547.5,104) scale(0.863,1)" fill="#ffff00">58</text>
<rect class="k" x="572" y="88" width="12" height="13"/><text transform="translate(572.5,99) scale(0.863,1)" fill="#ffff00">53</text>
<rect class="k" x="598" y="57" width="12" height="13"/><text transform="translate(598.5,68) scale(0.863,1)" fill="#ffff00">53</text>
<rect class="k" x="611" y="71" width="12" height="13"/><text transform="translate(611.5,82) scale(0.863,1)" fill="#ff0000">86</text>
<rect class="k" x="654" y="35" width="12" height="13"/><text transform="translate(654.5,46) scale(0.863,1)" fill="#ff9900">66</text>
<rect class="k" x="657" y="69" width="12" height="13"/><text transform="translate(657.5,80) scale(0.863,1)" fill="#ffff66">41</text>
<rect class="k" x="653" y="96" width="12" height="13"/><text transform="translate(653.5,107) scale(0.863,1)" fill="#ffff66">45</text>
<rect class="k" x="587" y="99" width="12" height="13"/><text transform="translate(587.5,110) scale(0.863,1)" fill="#ffff00">59</text>
<rect class="k" x="584" y="115" width="12" height="13"/><text transform="translate(584.5,126) scale(0.863,1)" fill="#ffff66">50</text>
<rect class="k" x="603" y="124" width="12" height="13"/><text transform="translate(603.5,135) scale(0.863,1)" fill="#ffff00">54</text>
<rect class="k" x="367" y="120" width="12" height="13"/><text transform="translate(367.5,131) scale(0.863,1)" fill="#ffff00">60</text>
<rect class="k" x="365" y="131" width="12" height="13"/><text transform="translate(365.5,142) scale(0.863,1)" fill="#ffff00">58</text>
<rect class="k" x="411" y="135" width="12" height="13"/><text transform="translate(411.5,146) scale(0.863,1)" fill="#ffff00">58</text>
<rect class="k" x="440" y="134" width="12" height="13"/><text transform="translate(440.5,145) scale(0.863,1)" fill="#ffff00">60</text>
<rect class="k" x="445" y="144" width="12" height="13"/><text transform="translate(445.5,155) scale(0.863,1)" fill="#ffff00">58</text>
<rect class="k" x="488" y="127" width="12" height="13"/><text transform="translate(488.5,138) scale(0.863,1)" fill="#ffff66">50</text>
<rect class="k" x="530" y="143" width="12" height="13"/><text transform="translate(530.5,154) scale(0.863,1)" fill="#ff9900">67</text>
<rect class="k" x="574" y="146" width="12" height="13"/><text transform="translate(574.5,157) scale(0.863,1)" fill="#ffff00">60</text>
<rect class="k" x="646" y="147" width="12" height="13"/><text transform="translate(646.5,158) scale(0.863,1)" fill="#ff9900">67</text>
<rect class="k" x="608" y="156" width="12" height="13"/><text transform="translate(608.5,167) scale(0.863,1)" fill="#ffff66">50</text>
<rect class="k" x="360" y="156" width="12" height="13"/><text transform="translate(360.5,167) scale(0.863,1)" fill="#ff9900">74</text>
<rect class="k" x="356" y="173" width="12" height="13"/><text transform="translate(356.5,184) scale(0.863,1)" fill="#ff9900">73</text>
<rect class="k" x="394" y="163" width="12" height="13"/><text transform="translate(394.5,174) scale(0.863,1)" fill="#ff0000">76</text>
<rect class="k" x="488" y="169" width="12" height="13"/><text transform="translate(488.5,180) scale(0.863,1)" fill="#ffff00">57</text>
<rect class="k" x="563" y="176" width="12" height="13"/><text transform="translate(563.5,187) scale(0.863,1)" fill="#ffff00">59</text>
<rect class="k" x="611" y="175" width="12" height="13"/><text transform="translate(611.5,186) scale(0.863,1)" fill="#ff9900">71</text>
<rect class="k" x="654" y="176" width="12" height="13"/><text transform="translate(654.5,187) scale(0.863,1)" fill="#ffff00">54</text>
<rect class="k" x="373" y="203" width="12" height="13"/><text transform="translate(373.5,214) scale(0.863,1)" fill="#ff0066">92</text>
<rect class="k" x="433" y="213" width="12" height="13"/><text transform="translate(433.5,224) scale(0.863,1)" fill="#ff9900">71</text>
<rect class="k" x="458" y="216" width="12" height="13"/><text transform="translate(458.5,227) scale(0.863,1)" fill="#ff0000">79</text>
<rect class="k" x="441" y="227" width="12" height="13"/><text transform="translate(441.5,238) scale(0.863,1)" fill="#ffff00">58</text>
<rect class="k" x="515" y="212" width="12" height="13"/><text transform="translate(515.5,223) scale(0.863,1)" fill="#ff9900">67</text>
<rect class="k" x="552" y="220" width="12" height="13"/><text transform="translate(552.5,231) scale(0.863,1)" fill="#ff0000">76</text>
<rect class="k" x="592" y="215" width="12" height="13"/><text transform="translate(592.5,226) scale(0.863,1)" fill="#ff9900">75</text>
<rect class="k" x="617" y="219" width="12" height="13"/><text transform="translate(617.5,230) scale(0.863,1)" fill="#ff9900">70</text>
<rect class="k" x="616" y="247" width="12" height="13"/><text transform="translate(616.5,258) scale(0.863,1)" fill="#ff9900">73</text>
<rect class="k" x="345" y="251" width="12" height="13"/><text transform="translate(345.5,262) scale(0.863,1)" fill="#ff0066">97</text>
<rect class="k" x="448" y="250" width="12" height="13"/><text transform="translate(448.5,261) scale(0.863,1)" fill="#ff0000">83</text>
<rect class="k" x="684" y="81" width="12" height="13"/><text transform="translate(684.5,92) scale(0.863,1)" fill="#ff9900">63</text>
<rect class="k" x="863" y="46" width="12" height="13"/><text transform="translate(863.5,57) scale(0.863,1)" fill="#ffff66">50</text>
<rect class="k" x="785" y="88" width="12" height="13"/><text transform="translate(785.5,99) scale(0.863,1)" fill="#ffffff">40</text>
<rect class="k" x="820" y="86" width="12" height="13"/><text transform="translate(820.5,97) scale(0.863,1)" fill="#ffffff">40</text>
<rect class="k" x="704" y="115" width="12" height="13"/><text transform="translate(704.5,126) scale(0.863,1)" fill="#ffffff">40</text>
<rect class="k" x="693" y="133" width="12" height="13"/><text transform="translate(693.5,144) scale(0.863,1)" fill="#ffff00">52</text>
<rect class="k" x="905" y="135" width="12" height="13"/><text transform="translate(905.5,146) scale(0.863,1)" fill="#ffff00">54</text>
<rect class="k" x="727" y="168" width="12" height="13"/><text transform="translate(727.5,179) scale(0.863,1)" fill="#ff9900">65</text>
<rect class="k" x="685" y="176" width="12" height="13"/><text transform="translate(685.5,187) scale(0.863,1)" fill="#ff9900">65</text>
<rect class="k" x="688" y="205" width="12" height="13"/><text transform="translate(688.5,216) scale(0.863,1)" fill="#ff9900">74</text>
<rect class="k" x="679" y="234" width="12" height="13"/><text transform="translate(679.5,245) scale(0.863,1)" fill="#ff9900">67</text>
<rect class="k" x="856" y="195" width="12" height="13"/><text transform="translate(856.5,206) scale(0.863,1)" fill="#ffffff">40</text>
<rect class="k" x="967" y="203" width="12" height="13"/><text transform="translate(967.5,214) scale(0.863,1)" fill="#ffffff">32</text>
<rect class="k" x="768" y="234" width="12" height="13"/><text transform="translate(768.5,245) scale(0.863,1)" fill="#ffffff">40</text>
<rect class="k" x="112" y="263" width="18" height="13"/><text transform="translate(112.5,274) scale(0.863,1)" fill="#ff0066">101</text>
<rect class="k" x="174" y="263" width="12" height="13"/><text transform="translate(174.5,274) scale(0.863,1)" fill="#ff0000">86</text>
<rect class="k" x="219" y="266" width="12" height="13"/><text transform="translate(219.5,277) scale(0.863,1)" fill="#ff0000">79</text>
<rect class="k" x="282" y="257" width="12" height="13"/><text transform="translate(282.5,268) scale(0.863,1)" fill="#ff0000">88</text>
<rect class="k" x="39" y="273" width="18" height="13"/><text transform="translate(39.5,284) scale(0.863,1)" fill="#aa00aa">108</text>
<rect class="k" x="129" y="277" width="12" height="13"/><text transform="translate(129.5,288) scale(0.863,1)" fill="#ff0066">94</text>
<rect class="k" x="257" y="282" width="12" height="13"/><text transform="translate(257.5,293) scale(0.863,1)" fill="#ff0000">79</text>
<rect class="k" x="105" y="294" width="18" height="13"/><text transform="translate(105.5,305) scale(0.863,1)" fill="#ff0066">101</text>
<rect class="k" x="153" y="298" width="12" height="13"/><text transform="translate(153.5,309) scale(0.863,1)" fill="#ff0000">76</text>
<rect class="k" x="195" y="303" width="12" height="13"/><text transform="translate(195.5,314) scale(0.863,1)" fill="#ff0066">94</text>
<rect class="k" x="243" y="301" width="12" height="13"/><text transform="translate(243.5,312) scale(0.863,1)" fill="#ff0000">86</text>
<rect class="k" x="258" y="300" width="18" height="13"/><text transform="translate(258.5,311) scale(0.863,1)" fill="#aa00aa">105</text>
<rect class="k" x="306" y="295" width="12" height="13"/><text transform="translate(306.5,306) scale(0.863,1)" fill="#ff0000">86</text>
<rect class="k" x="35" y="308" width="18" height="13"/><text transform="translate(35.5,319) scale(0.863,1)" fill="#aa00aa">104</text>
<rect class="k" x="59" y="315" width="18" height="13"/><text transform="translate(59.5,326) scale(0.863,1)" fill="#aa00aa">104</text>
<rect class="k" x="85" y="309" width="18" height="13"/><text transform="translate(85.5,320) scale(0.863,1)" fill="#ff0066">101</text>
<rect class="k" x="100" y="319" width="12" height="13"/><text transform="translate(100.5,330) scale(0.863,1)" fill="#ff0066">94</text>
<rect class="k" x="109" y="312" width="12" height="13"/><text transform="translate(109.5,323) scale(0.863,1)" fill="#ff0066">90</text>
<rect class="k" x="139" y="311" width="12" height="13"/><text transform="translate(139.5,322) scale(0.863,1)" fill="#ff0066">97</text>
<rect class="k" x="151" y="322" width="12" height="13"/><text transform="translate(151.5,333) scale(0.863,1)" fill="#ff0066">97</text>
<rect class="k" x="59" y="330" width="12" height="13"/><text transform="translate(59.5,341) scale(0.863,1)" fill="#ff0066">97</text>
<rect class="k" x="62" y="342" width="12" height="13"/><text transform="translate(62.5,353) scale(0.863,1)" fill="#ff0066">97</text>
<rect class="k" x="80" y="348" width="18" height="13"/><text transform="translate(80.5,359) scale(0.863,1)" fill="#aa00aa">108</text>
<rect class="k" x="185" y="342" width="12" height="13"/><text transform="translate(185.5,353) scale(0.863,1)" fill="#ff0000">83</text>
<rect class="k" x="276" y="335" width="12" height="13"/><text transform="translate(276.5,346) scale(0.863,1)" fill="#ff9900">73</text>
<rect class="k" x="318" y="350" width="12" height="13"/><text transform="translate(318.5,361) scale(0.863,1)" fill="#ff0000">80</text>
<rect class="k" x="33" y="356" width="18" height="13"/><text transform="translate(33.5,367) scale(0.863,1)" fill="#aa00aa">104</text>
<rect class="k" x="91" y="358" width="18" height="13"/><text transform="translate(91.5,369) scale(0.863,1)" fill="#aa00aa">112</text>
<rect class="k" x="57" y="363" width="12" height="13"/><text transform="translate(57.5,374) scale(0.863,1)" fill="#ff0000">83</text>
<rect class="k" x="43" y="369" width="12" height="13"/><text transform="translate(43.5,380) scale(0.863,1)" fill="#ff0066">94</text>
<rect class="k" x="138" y="352" width="12" height="13"/><text transform="translate(138.5,363) scale(0.863,1)" fill="#ff0066">90</text>
<rect class="k" x="165" y="362" width="12" height="13"/><text transform="translate(165.5,373) scale(0.863,1)" fill="#ff0066">97</text>
<rect class="k" x="215" y="357" width="12" height="13"/><text transform="translate(215.5,368) scale(0.863,1)" fill="#ff0000">83</text>
<rect class="k" x="263" y="367" width="12" height="13"/><text transform="translate(263.5,378) scale(0.863,1)" fill="#ff0000">78</text>
<rect class="k" x="250" y="377" width="12" height="13"/><text transform="translate(250.5,388) scale(0.863,1)" fill="#ff0000">86</text>
<rect class="k" x="274" y="382" width="18" height="13"/><text transform="translate(274.5,393) scale(0.863,1)" fill="#ff0066">101</text>
<rect class="k" x="300" y="382" width="18" height="13"/><text transform="translate(300.5,393) scale(0.863,1)" fill="#aa00aa">109</text>
<rect class="k" x="12" y="387" width="12" height="13"/><text transform="translate(12.5,398) scale(0.863,1)" fill="#ff0066">94</text>
<rect class="k" x="-5" y="398" width="18" height="13"/><text transform="translate(-4.5,409) scale(0.863,1)" fill="#ff0066">101</text>
<rect class="k" x="73" y="385" width="12" height="13"/><text transform="translate(73.5,396) scale(0.863,1)" fill="#ff0066">90</text>
<rect class="k" x="107" y="387" width="18" height="13"/><text transform="translate(107.5,398) scale(0.863,1)" fill="#ff0066">101</text>
<rect class="k" x="171" y="390" width="12" height="13"/><text transform="translate(171.5,401) scale(0.863,1)" fill="#ff0000">76</text>
<rect class="k" x="188" y="387" width="12" height="13"/><text transform="translate(188.5,398) scale(0.863,1)" fill="#ff0000">83</text>
<rect class="k" x="225" y="393" width="12" height="13"/><text transform="translate(225.5,404) scale(0.863,1)" fill="#ff0000">81</text>
<rect class="k" x="61" y="413" width="12" height="13"/><text transform="translate(61.5,424) scale(0.863,1)" fill="#ff9900">68</text>
<rect class="k" x="113" y="416" width="12" height="13"/><text transform="translate(113.5,427) scale(0.863,1)" fill="#ff0000">83</text>
<rect class="k" x="202" y="410" width="18" height="13"/><text transform="translate(202.5,421) scale(0.863,1)" fill="#aa00aa">112</text>
<rect class="k" x="188" y="415" width="12" height="13"/><text transform="translate(188.5,426) scale(0.863,1)" fill="#ff0000">76</text>
<rect class="k" x="204" y="425" width="12" height="13"/><text transform="translate(204.5,436) scale(0.863,1)" fill="#ff0066">99</text>
<rect class="k" x="240" y="422" width="18" height="13"/><text transform="translate(240.5,433) scale(0.863,1)" fill="#ff0066">101</text>
<rect class="k" x="273" y="419" width="12" height="13"/><text transform="translate(273.5,430) scale(0.863,1)" fill="#ff0000">83</text>
<rect class="k" x="275" y="432" width="12" height="13"/><text transform="translate(275.5,443) scale(0.863,1)" fill="#ff9900">74</text>
<rect class="k" x="129" y="430" width="12" height="13"/><text transform="translate(129.5,441) scale(0.863,1)" fill="#ff0000">86</text>
<rect class="k" x="169" y="440" width="12" height="13"/><text transform="translate(169.5,451) scale(0.863,1)" fill="#ff0000">86</text>
<rect class="k" x="323" y="439" width="12" height="13"/><text transform="translate(323.5,450) scale(0.863,1)" fill="#ff0000">78</text>
<rect class="k" x="26" y="447" width="12" height="13"/><text transform="translate(26.5,458) scale(0.863,1)" fill="#ff0000">77</text>
<rect class="k" x="71" y="447" width="12" height="13"/><text transform="translate(71.5,458) scale(0.863,1)" fill="#ff9900">68</text>
<rect class="k" x="109" y="457" width="12" height="13"/><text transform="translate(109.5,468) scale(0.863,1)" fill="#ff0000">83</text>
<rect class="k" x="198" y="456" width="12" height="13"/><text transform="translate(198.5,467) scale(0.863,1)" fill="#ff0000">86</text>
<rect class="k" x="214" y="457" width="12" height="13"/><text transform="translate(214.5,468) scale(0.863,1)" fill="#ff9900">68</text>
<rect class="k" x="235" y="454" width="12" height="13"/><text transform="translate(235.5,465) scale(0.863,1)" fill="#ff0000">87</text>
<rect class="k" x="289" y="462" width="12" height="13"/><text transform="translate(289.5,473) scale(0.863,1)" fill="#ffff00">60</text>
<rect class="k" x="256" y="467" width="12" height="13"/><text transform="translate(256.5,478) scale(0.863,1)" fill="#ff9900">67</text>
<rect class="k" x="226" y="473" width="12" height="13"/><text transform="translate(226.5,484) scale(0.863,1)" fill="#ff0000">84</text>
<rect class="k" x="334" y="465" width="12" height="13"/><text transform="translate(334.5,476) scale(0.863,1)" fill="#ff0000">86</text>
<rect class="k" x="122" y="480" width="12" height="13"/><text transform="translate(122.5,491) scale(0.863,1)" fill="#ff0000">79</text>
<rect class="k" x="267" y="485" width="12" height="13"/><text transform="translate(267.5,496) scale(0.863,1)" fill="#ff0000">86</text>
<rect class="k" x="166" y="498" width="12" height="13"/><text transform="translate(166.5,509) scale(0.863,1)" fill="#ff9900">68</text>
<rect class="k" x="322" y="500" width="12" height="13"/><text transform="translate(322.5,511) scale(0.863,1)" fill="#ff9900">73</text>
<rect class="k" x="336" y="277" width="12" height="13"/><text transform="translate(336.5,288) scale(0.863,1)" fill="#ff0066">92</text>
<rect class="k" x="530" y="258" width="12" height="13"/><text transform="translate(530.5,269) scale(0.863,1)" fill="#ff9900">73</text>
<rect class="k" x="647" y="253" width="12" height="13"/><text transform="translate(647.5,264) scale(0.863,1)" fill="#ff9900">74</text>
<rect class="k" x="647" y="263" width="12" height="13"/><text transform="translate(647.5,274) scale(0.863,1)" fill="#ff9900">72</text>
<rect class="k" x="411" y="263" width="12" height="13"/><text transform="translate(411.5,274) scale(0.863,1)" fill="#ff0066">90</text>
<rect class="k" x="426" y="263" width="12" height="13"/><text transform="translate(426.5,274) scale(0.863,1)" fill="#ff9900">71</text>
<rect class="k" x="577" y="270" width="12" height="13"/><text transform="translate(577.5,281) scale(0.863,1)" fill="#ffff00">55</text>
<rect class="k" x="602" y="267" width="12" height="13"/><text transform="translate(602.5,278) scale(0.863,1)" fill="#ffff00">59</text>
<rect class="k" x="632" y="271" width="12" height="13"/><text transform="translate(632.5,282) scale(0.863,1)" fill="#ff9900">74</text>
<rect class="k" x="661" y="271" width="12" height="13"/><text transform="translate(661.5,282) scale(0.863,1)" fill="#ff0000">80</text>
<rect class="k" x="389" y="281" width="18" height="13"/><text transform="translate(389.5,292) scale(0.863,1)" fill="#aa00aa">104</text>
<rect class="k" x="473" y="280" width="12" height="13"/><text transform="translate(473.5,291) scale(0.863,1)" fill="#ff0000">80</text>
<rect class="k" x="502" y="286" width="12" height="13"/><text transform="translate(502.5,297) scale(0.863,1)" fill="#ff0000">80</text>
<rect class="k" x="518" y="293" width="12" height="13"/><text transform="translate(518.5,304) scale(0.863,1)" fill="#ff0000">82</text>
<rect class="k" x="542" y="298" width="12" height="13"/><text transform="translate(542.5,309) scale(0.863,1)" fill="#ffff00">58</text>
<rect class="k" x="595" y="296" width="12" height="13"/><text transform="translate(595.5,307) scale(0.863,1)" fill="#ff9900">71</text>
<rect class="k" x="660" y="302" width="12" height="13"/><text transform="translate(660.5,313) scale(0.863,1)" fill="#ff9900">70</text>
<rect class="k" x="370" y="298" width="12" height="13"/><text transform="translate(370.5,309) scale(0.863,1)" fill="#ff0000">76</text>
<rect class="k" x="343" y="316" width="12" height="13"/><text transform="translate(343.5,327) scale(0.863,1)" fill="#ff0000">86</text>
<rect class="k" x="434" y="312" width="12" height="13"/><text transform="translate(434.5,323) scale(0.863,1)" fill="#ff9900">74</text>
<rect class="k" x="402" y="321" width="12" height="13"/><text transform="translate(402.5,332) scale(0.863,1)" fill="#ff0000">79</text>
<rect class="k" x="375" y="329" width="12" height="13"/><text transform="translate(375.5,340) scale(0.863,1)" fill="#ff0000">76</text>
<rect class="k" x="443" y="333" width="12" height="13"/><text transform="translate(443.5,344) scale(0.863,1)" fill="#ff0066">89</text>
<rect class="k" x="482" y="328" width="18" height="13"/><text transform="translate(482.5,339) scale(0.863,1)" fill="#ff00ff">158</text><rect x="482" y="340" width="18" height="1" fill="#ff00ff"/>
<rect class="k" x="482" y="336" width="12" height="13"/><text transform="translate(482.5,347) scale(0.863,1)" fill="#ff0000">83</text>
<rect class="k" x="515" y="328" width="12" height="13"/><text transform="translate(515.5,339) scale(0.863,1)" fill="#ffff00">59</text>
<rect class="k" x="515" y="344" width="12" height="13"/><text transform="translate(515.5,355) scale(0.863,1)" fill="#ff9900">70</text>
<rect class="k" x="606" y="319" width="12" height="13"/><text transform="translate(606.5,330) scale(0.863,1)" fill="#ff9900">69</text>
<rect class="k" x="634" y="316" width="12" height="13"/><text transform="translate(634.5,327) scale(0.863,1)" fill="#ff9900">66</text>
<rect class="k" x="639" y="331" width="12" height="13"/><text transform="translate(639.5,342) scale(0.863,1)" fill="#ff9900">72</text>
<rect class="k" x="663" y="343" width="12" height="13"/><text transform="translate(663.5,354) scale(0.863,1)" fill="#ff0000">76</text>
<rect class="k" x="367" y="352" width="12" height="13"/><text transform="translate(367.5,363) scale(0.863,1)" fill="#ff0000">83</text>
<rect class="k" x="392" y="357" width="12" height="13"/><text transform="translate(392.5,368) scale(0.863,1)" fill="#ff0000">85</text>
<rect class="k" x="443" y="357" width="12" height="13"/><text transform="translate(443.5,368) scale(0.863,1)" fill="#ff0000">86</text>
<rect class="k" x="466" y="368" width="12" height="13"/><text transform="translate(466.5,379) scale(0.863,1)" fill="#ff0000">78</text>
<rect class="k" x="524" y="370" width="12" height="13"/><text transform="translate(524.5,381) scale(0.863,1)" fill="#ff0000">83</text>
<rect class="k" x="539" y="368" width="12" height="13"/><text transform="translate(539.5,379) scale(0.863,1)" fill="#ff0066">89</text>
<rect class="k" x="582" y="364" width="12" height="13"/><text transform="translate(582.5,375) scale(0.863,1)" fill="#ff0000">82</text>
<rect class="k" x="595" y="375" width="12" height="13"/><text transform="translate(595.5,386) scale(0.863,1)" fill="#ffff00">58</text>
<rect class="k" x="631" y="377" width="18" height="13"/><text transform="translate(631.5,388) scale(0.863,1)" fill="#aa00aa">104</text>
<rect class="k" x="390" y="375" width="12" height="13"/><text transform="translate(390.5,386) scale(0.863,1)" fill="#ff0000">79</text>
<rect class="k" x="406" y="379" width="12" height="13"/><text transform="translate(406.5,390) scale(0.863,1)" fill="#ff9900">71</text>
<rect class="k" x="445" y="388" width="12" height="13"/><text transform="translate(445.5,399) scale(0.863,1)" fill="#ff9900">68</text>
<rect class="k" x="351" y="389" width="18" height="13"/><text transform="translate(351.5,400) scale(0.863,1)" fill="#aa00aa">105</text><rect x="351" y="401" width="18" height="1" fill="#aa00aa"/>
<rect class="k" x="378" y="398" width="12" height="13"/><text transform="translate(378.5,409) scale(0.863,1)" fill="#ff0066">94</text>
<rect class="k" x="402" y="394" width="12" height="13"/><text transform="translate(402.5,405) scale(0.863,1)" fill="#ff0000">83</text>
<rect class="k" x="341" y="404" width="12" height="13"/><text transform="translate(341.5,415) scale(0.863,1)" fill="#ff0066">89</text>
<rect class="k" x="468" y="406" width="12" height="13"/><text transform="translate(468.5,417) scale(0.863,1)" fill="#ff0066">89</text>
<rect class="k" x="504" y="408" width="12" height="13"/><text transform="translate(504.5,419) scale(0.863,1)" fill="#ff0066">90</text>
<rect class="k" x="563" y="397" width="12" height="13"/><text transform="translate(563.5,408) scale(0.863,1)" fill="#ff0000">76</text>
<rect class="k" x="646" y="401" width="12" height="13"/><text transform="translate(646.5,412) scale(0.863,1)" fill="#ff0066">94</text>
<rect class="k" x="575" y="418" width="12" height="13"/><text transform="translate(575.5,429) scale(0.863,1)" fill="#ff0000">84</text>
<rect class="k" x="620" y="426" width="12" height="13"/><text transform="translate(620.5,437) scale(0.863,1)" fill="#ff0066">95</text>
<rect class="k" x="430" y="420" width="12" height="13"/><text transform="translate(430.5,431) scale(0.863,1)" fill="#ff0000">83</text>
<rect class="k" x="387" y="430" width="12" height="13"/><text transform="translate(387.5,441) scale(0.863,1)" fill="#ff0066">98</text>
<rect class="k" x="400" y="429" width="18" height="13"/><text transform="translate(400.5,440) scale(0.863,1)" fill="#ff0066">100</text>
<rect class="k" x="363" y="444" width="12" height="13"/><text transform="translate(363.5,455) scale(0.863,1)" fill="#ff0000">86</text>
<rect class="k" x="404" y="446" width="12" height="13"/><text transform="translate(404.5,457) scale(0.863,1)" fill="#ff0066">90</text>
<rect class="k" x="398" y="453" width="12" height="13"/><text transform="translate(398.5,464) scale(0.863,1)" fill="#ff0000">88</text>
<rect class="k" x="439" y="455" width="18" height="13"/><text transform="translate(439.5,466) scale(0.863,1)" fill="#ff0066">101</text><rect x="439" y="467" width="18" height="1" fill="#ff0066"/>
<rect class="k" x="469" y="448" width="12" height="13"/><text transform="translate(469.5,459) scale(0.863,1)" fill="#ff0000">76</text>
<rect class="k" x="493" y="440" width="12" height="13"/><text transform="translate(493.5,451) scale(0.863,1)" fill="#ff0066">89</text><rect x="493" y="452" width="12" height="1" fill="#ff0066"/>
<rect class="k" x="515" y="455" width="12" height="13"/><text transform="translate(515.5,466) scale(0.863,1)" fill="#ff0000">84</text><rect x="515" y="467" width="12" height="1" fill="#ff0000"/>
<rect class="k" x="537" y="437" width="12" height="13"/><text transform="translate(537.5,448) scale(0.863,1)" fill="#ff0000">81</text>
<rect class="k" x="555" y="447" width="12" height="13"/><text transform="translate(555.5,458) scale(0.863,1)" fill="#ff0000">86</text>
<rect class="k" x="594" y="436" width="12" height="13"/><text transform="translate(594.5,447) scale(0.863,1)" fill="#ff0066">90</text>
<rect class="k" x="637" y="440" width="12" height="13"/><text transform="translate(637.5,451) scale(0.863,1)" fill="#ff0000">76</text>
<rect class="k" x="575" y="456" width="12" height="13"/><text transform="translate(575.5,467) scale(0.863,1)" fill="#ff9900">62</text>
<rect class="k" x="606" y="461" width="12" height="13"/><text transform="translate(606.5,472) scale(0.863,1)" fill="#ff0000">76</text>
<rect class="k" x="622" y="461" width="18" height="13"/><text transform="translate(622.5,472) scale(0.863,1)" fill="#ff00ff">127</text><rect x="622" y="473" width="18" height="1" fill="#ff00ff"/>
<rect class="k" x="648" y="465" width="12" height="13"/><text transform="translate(648.5,476) scale(0.863,1)" fill="#ff0066">94</text>
<rect class="k" x="407" y="476" width="12" height="13"/><text transform="translate(407.5,487) scale(0.863,1)" fill="#ff9900">66</text>
<rect class="k" x="473" y="470" width="12" height="13"/><text transform="translate(473.5,481) scale(0.863,1)" fill="#ff9900">72</text>
<rect class="k" x="505" y="472" width="12" height="13"/><text transform="translate(505.5,483) scale(0.863,1)" fill="#ff0066">97</text>
<rect class="k" x="451" y="481" width="12" height="13"/><text transform="translate(451.5,492) scale(0.863,1)" fill="#ff0000">84</text>
<rect class="k" x="560" y="472" width="12" height="13"/><text transform="translate(560.5,483) scale(0.863,1)" fill="#ff0000">83</text>
<rect class="k" x="352" y="481" width="12" height="13"/><text transform="translate(352.5,492) scale(0.863,1)" fill="#ff0000">82</text><rect x="352" y="493" width="12" height="1" fill="#ff0000"/>
<rect class="k" x="624" y="483" width="12" height="13"/><text transform="translate(624.5,494) scale(0.863,1)" fill="#ff9900">72</text>
<rect class="k" x="570" y="486" width="12" height="13"/><text transform="translate(570.5,497) scale(0.863,1)" fill="#ff0000">87</text>
<rect class="k" x="591" y="495" width="12" height="13"/><text transform="translate(591.5,506) scale(0.863,1)" fill="#ff0000">76</text>
<rect class="k" x="563" y="498" width="18" height="13"/><text transform="translate(563.5,509) scale(0.863,1)" fill="#ff0066">100</text>
<rect class="k" x="372" y="493" width="12" height="13"/><text transform="translate(372.5,504) scale(0.863,1)" fill="#ffff00">62</text>
<rect class="k" x="356" y="498" width="12" height="13"/><text transform="translate(356.5,509) scale(0.863,1)" fill="#ff0000">75</text>
<rect class="k" x="411" y="500" width="12" height="13"/><text transform="translate(411.5,511) scale(0.863,1)" fill="#ff0000">88</text>
<rect class="k" x="695" y="257" width="12" height="13"/><text transform="translate(695.5,268) scale(0.863,1)" fill="#ffff00">61</text>
<rect class="k" x="723" y="254" width="12" height="13"/><text transform="translate(723.5,265) scale(0.863,1)" fill="#ff9900">63</text>
<rect class="k" x="725" y="274" width="12" height="13"/><text transform="translate(725.5,285) scale(0.863,1)" fill="#ffff00">54</text>
<rect class="k" x="695" y="288" width="12" height="13"/><text transform="translate(695.5,299) scale(0.863,1)" fill="#ff9900">71</text>
<rect class="k" x="862" y="267" width="12" height="13"/><text transform="translate(862.5,278) scale(0.863,1)" fill="#ffff00">54</text>
<rect class="k" x="973" y="289" width="12" height="13"/><text transform="translate(973.5,300) scale(0.863,1)" fill="#ffff00">54</text>
<rect class="k" x="782" y="315" width="12" height="13"/><text transform="translate(782.5,326) scale(0.863,1)" fill="#ffff66">47</text>
<rect class="k" x="842" y="325" width="12" height="13"/><text transform="translate(842.5,336) scale(0.863,1)" fill="#ffff00">61</text>
<rect class="k" x="937" y="330" width="12" height="13"/><text transform="translate(937.5,341) scale(0.863,1)" fill="#ff9900">68</text>
<rect class="k" x="708" y="330" width="12" height="13"/><text transform="translate(708.5,341) scale(0.863,1)" fill="#ffff00">56</text>
<rect class="k" x="704" y="362" width="12" height="13"/><text transform="translate(704.5,373) scale(0.863,1)" fill="#ff0066">92</text>
<rect class="k" x="675" y="393" width="12" height="13"/><text transform="translate(675.5,404) scale(0.863,1)" fill="#ff0000">86</text>
<rect class="k" x="747" y="391" width="12" height="13"/><text transform="translate(747.5,402) scale(0.863,1)" fill="#ff0000">77</text>
<rect class="k" x="823" y="387" width="12" height="13"/><text transform="translate(823.5,398) scale(0.863,1)" fill="#ff9900">68</text>
<rect class="k" x="864" y="396" width="12" height="13"/><text transform="translate(864.5,407) scale(0.863,1)" fill="#ffff66">50</text>
<rect class="k" x="967" y="385" width="12" height="13"/><text transform="translate(967.5,396) scale(0.863,1)" fill="#ffff66">43</text>
<rect class="k" x="702" y="412" width="12" height="13"/><text transform="translate(702.5,423) scale(0.863,1)" fill="#ff9900">70</text>
<rect class="k" x="735" y="416" width="12" height="13"/><text transform="translate(735.5,427) scale(0.863,1)" fill="#ff9900">74</text>
<rect class="k" x="798" y="416" width="12" height="13"/><text transform="translate(798.5,427) scale(0.863,1)" fill="#ff9900">68</text>
<rect class="k" x="751" y="428" width="12" height="13"/><text transform="translate(751.5,439) scale(0.863,1)" fill="#ffff66">50</text>
<rect class="k" x="792" y="431" width="18" height="13"/><text transform="translate(792.5,442) scale(0.863,1)" fill="#ff00ff">151</text>
<rect class="k" x="675" y="432" width="12" height="13"/><text transform="translate(675.5,443) scale(0.863,1)" fill="#ff0066">90</text><rect x="675" y="444" width="12" height="1" fill="#ff0066"/>
<rect class="k" x="691" y="437" width="12" height="13"/><text transform="translate(691.5,448) scale(0.863,1)" fill="#ff0000">83</text>
<rect class="k" x="685" y="449" width="12" height="13"/><text transform="translate(685.5,460) scale(0.863,1)" fill="#ff0066">97</text>
<rect class="k" x="700" y="458" width="12" height="13"/><text transform="translate(700.5,469) scale(0.863,1)" fill="#ff0000">79</text>
<rect class="k" x="931" y="438" width="12" height="13"/><text transform="translate(931.5,449) scale(0.863,1)" fill="#ffff66">47</text>
<rect class="k" x="1000" y="423" width="12" height="13"/><text transform="translate(1000.5,434) scale(0.863,1)" fill="#ffff66">47</text>
<rect class="k" x="848" y="461" width="12" height="13"/><text transform="translate(848.5,472) scale(0.863,1)" fill="#ff0000">76</text>
<rect class="k" x="830" y="468" width="12" height="13"/><text transform="translate(830.5,479) scale(0.863,1)" fill="#ff9900">68</text>
<rect class="k" x="878" y="484" width="12" height="13"/><text transform="translate(878.5,495) scale(0.863,1)" fill="#ff9900">68</text><rect x="878" y="496" width="12" height="1" fill="#ff9900"/>
<rect class="k" x="995" y="480" width="12" height="13"/><text transform="translate(995.5,491) scale(0.863,1)" fill="#ffff66">43</text>
<rect class="k" x="705" y="492" width="12" height="13"/><text transform="translate(705.5,503) scale(0.863,1)" fill="#ff0000">86</text>
<rect class="k" x="722" y="490" width="12" height="13"/><text transform="translate(722.5,501) scale(0.863,1)" fill="#ffff66">47</text>
<rect class="k" x="717" y="500" width="12" height="13"/><text transform="translate(717.5,511) scale(0.863,1)" fill="#ff9900">72</text>
<rect class="k" x="795" y="499" width="12" height="13"/><text transform="translate(795.5,510) scale(0.863,1)" fill="#ffff00">58</text>
<rect class="k" x="836" y="502" width="12" height="13"/><text transform="translate(836.5,513) scale(0.863,1)" fill="#ffff66">50</text>
<rect class="k" x="33" y="519" width="12" height="13"/><text transform="translate(33.5,530) scale(0.863,1)" fill="#ffff00">60</text>
<rect class="k" x="120" y="522" width="12" height="13"/><text transform="translate(120.5,533) scale(0.863,1)" fill="#ff9900">65</text>
<rect class="k" x="279" y="506" width="12" height="13"/><text transform="translate(279.5,517) scale(0.863,1)" fill="#ff0000">84</text>
<rect class="k" x="243" y="525" width="12" height="13"/><text transform="translate(243.5,536) scale(0.863,1)" fill="#ff9900">71</text>
<rect class="k" x="267" y="524" width="12" height="13"/><text transform="translate(267.5,535) scale(0.863,1)" fill="#ff0066">90</text>
<rect class="k" x="284" y="531" width="12" height="13"/><text transform="translate(284.5,542) scale(0.863,1)" fill="#ff0000">83</text>
<rect class="k" x="216" y="537" width="12" height="13"/><text transform="translate(216.5,548) scale(0.863,1)" fill="#ff9900">72</text>
<rect class="k" x="266" y="551" width="12" height="13"/><text transform="translate(266.5,562) scale(0.863,1)" fill="#ff0000">77</text>
<rect class="k" x="329" y="561" width="18" height="13"/><text transform="translate(329.5,572) scale(0.863,1)" fill="#aa00aa">115</text><rect x="329" y="573" width="18" height="1" fill="#aa00aa"/>
<rect class="k" x="-9" y="572" width="12" height="13"/><text transform="translate(-8.5,583) scale(0.863,1)" fill="#ffff66">53</text>
<rect class="k" x="91" y="576" width="12" height="13"/><text transform="translate(91.5,587) scale(0.863,1)" fill="#ffff00">53</text>
<rect class="k" x="245" y="571" width="12" height="13"/><text transform="translate(245.5,582) scale(0.863,1)" fill="#ff0066">99</text>
<rect class="k" x="271" y="576" width="12" height="13"/><text transform="translate(271.5,587) scale(0.863,1)" fill="#ff0000">76</text>
<rect class="k" x="-9" y="592" width="12" height="13"/><text transform="translate(-8.5,603) scale(0.863,1)" fill="#ffff66">56</text>
<rect class="k" x="217" y="598" width="12" height="13"/><text transform="translate(217.5,609) scale(0.863,1)" fill="#ff9900">71</text>
<rect class="k" x="1" y="631" width="12" height="13"/><text transform="translate(1.5,642) scale(0.863,1)" fill="#ffff00">58</text>
<rect class="k" x="136" y="629" width="12" height="13"/><text transform="translate(136.5,640) scale(0.863,1)" fill="#ffff00">51</text>
<rect class="k" x="216" y="624" width="12" height="13"/><text transform="translate(216.5,635) scale(0.863,1)" fill="#ff9900">63</text>
<rect class="k" x="200" y="634" width="12" height="13"/><text transform="translate(200.5,645) scale(0.863,1)" fill="#ff0000">75</text>
<rect class="k" x="302" y="637" width="12" height="13"/><text transform="translate(302.5,648) scale(0.863,1)" fill="#ffff00">59</text>
<rect class="k" x="82" y="658" width="12" height="13"/><text transform="translate(82.5,669) scale(0.863,1)" fill="#ffff66">47</text>
<rect class="k" x="314" y="654" width="12" height="13"/><text transform="translate(314.5,665) scale(0.863,1)" fill="#ff9900">63</text>
<rect class="k" x="314" y="685" width="12" height="13"/><text transform="translate(314.5,696) scale(0.863,1)" fill="#ffff00">56</text>
<rect class="k" x="288" y="693" width="12" height="13"/><text transform="translate(288.5,704) scale(0.863,1)" fill="#ff9900">64</text>
<rect class="k" x="322" y="700" width="18" height="13"/><text transform="translate(322.5,711) scale(0.863,1)" fill="#ff00ff">122</text><rect x="322" y="712" width="18" height="1" fill="#ff00ff"/>
<rect class="k" x="54" y="703" width="12" height="13"/><text transform="translate(54.5,714) scale(0.863,1)" fill="#ffff66">50</text>
<rect class="k" x="163" y="701" width="12" height="13"/><text transform="translate(163.5,712) scale(0.863,1)" fill="#ffff00">55</text>
<rect class="k" x="225" y="706" width="12" height="13"/><text transform="translate(225.5,717) scale(0.863,1)" fill="#ffff00">55</text>
<rect class="k" x="254" y="724" width="12" height="13"/><text transform="translate(254.5,735) scale(0.863,1)" fill="#ff9900">70</text>
<rect class="k" x="295" y="723" width="12" height="13"/><text transform="translate(295.5,734) scale(0.863,1)" fill="#ff9900">66</text>
<rect class="k" x="318" y="724" width="12" height="13"/><text transform="translate(318.5,735) scale(0.863,1)" fill="#ff0000">78</text>
<rect class="k" x="260" y="738" width="12" height="13"/><text transform="translate(260.5,749) scale(0.863,1)" fill="#ff9900">68</text>
<rect class="k" x="284" y="744" width="12" height="13"/><text transform="translate(284.5,755) scale(0.863,1)" fill="#ff9900">64</text>
<rect class="k" x="317" y="738" width="12" height="13"/><text transform="translate(317.5,749) scale(0.863,1)" fill="#ff9900">67</text>
<rect class="k" x="147" y="752" width="12" height="13"/><text transform="translate(147.5,763) scale(0.863,1)" fill="#ffff66">49</text>
<rect class="k" x="202" y="754" width="12" height="13"/><text transform="translate(202.5,765) scale(0.863,1)" fill="#ffff66">41</text>
<rect class="k" x="311" y="754" width="12" height="13"/><text transform="translate(311.5,765) scale(0.863,1)" fill="#ff9900">68</text>
<rect class="k" x="502" y="514" width="12" height="13"/><text transform="translate(502.5,525) scale(0.863,1)" fill="#ff9900">62</text>
<rect class="k" x="391" y="528" width="12" height="13"/><text transform="translate(391.5,539) scale(0.863,1)" fill="#ff0000">82</text>
<rect class="k" x="443" y="523" width="12" height="13"/><text transform="translate(443.5,534) scale(0.863,1)" fill="#ff0066">89</text>
<rect class="k" x="651" y="524" width="12" height="13"/><text transform="translate(651.5,535) scale(0.863,1)" fill="#ff0000">83</text>
<rect class="k" x="578" y="533" width="12" height="13"/><text transform="translate(578.5,544) scale(0.863,1)" fill="#ff9900">66</text>
<rect class="k" x="609" y="533" width="12" height="13"/><text transform="translate(609.5,544) scale(0.863,1)" fill="#ff0066">94</text>
<rect class="k" x="359" y="548" width="12" height="13"/><text transform="translate(359.5,559) scale(0.863,1)" fill="#ff9900">72</text>
<rect class="k" x="383" y="543" width="12" height="13"/><text transform="translate(383.5,554) scale(0.863,1)" fill="#ff9900">70</text>
<rect class="k" x="464" y="547" width="12" height="13"/><text transform="translate(464.5,558) scale(0.863,1)" fill="#ff0000">80</text>
<rect class="k" x="510" y="549" width="12" height="13"/><text transform="translate(510.5,560) scale(0.863,1)" fill="#ff0066">88</text>
<rect class="k" x="561" y="555" width="12" height="13"/><text transform="translate(561.5,566) scale(0.863,1)" fill="#ff0066">94</text>
<rect class="k" x="445" y="559" width="12" height="13"/><text transform="translate(445.5,570) scale(0.863,1)" fill="#ff0066">90</text>
<rect class="k" x="609" y="559" width="12" height="13"/><text transform="translate(609.5,570) scale(0.863,1)" fill="#ff0000">80</text>
<rect class="k" x="380" y="568" width="12" height="13"/><text transform="translate(380.5,579) scale(0.863,1)" fill="#ff0000">81</text>
<rect class="k" x="417" y="576" width="12" height="13"/><text transform="translate(417.5,587) scale(0.863,1)" fill="#ff0000">80</text>
<rect class="k" x="513" y="575" width="12" height="13"/><text transform="translate(513.5,586) scale(0.863,1)" fill="#ff0000">82</text>
<rect class="k" x="600" y="575" width="12" height="13"/><text transform="translate(600.5,586) scale(0.863,1)" fill="#ffff00">60</text>
<rect class="k" x="468" y="580" width="12" height="13"/><text transform="translate(468.5,591) scale(0.863,1)" fill="#ff0000">79</text>
<rect class="k" x="489" y="582" width="12" height="13"/><text transform="translate(489.5,593) scale(0.863,1)" fill="#ff0000">81</text>
<rect class="k" x="453" y="587" width="12" height="13"/><text transform="translate(453.5,598) scale(0.863,1)" fill="#ff0000">84</text>
<rect class="k" x="638" y="584" width="12" height="13"/><text transform="translate(638.5,595) scale(0.863,1)" fill="#ff0066">99</text><rect x="638" y="596" width="12" height="1" fill="#ff0066"/>
<rect class="k" x="643" y="592" width="12" height="13"/><text transform="translate(643.5,603) scale(0.863,1)" fill="#ff9900">66</text>
<rect class="k" x="663" y="589" width="18" height="13"/><text transform="translate(663.5,600) scale(0.863,1)" fill="#aa00aa">104</text>
<rect class="k" x="574" y="591" width="12" height="13"/><text transform="translate(574.5,602) scale(0.863,1)" fill="#ff0000">80</text>
<rect class="k" x="502" y="594" width="12" height="13"/><text transform="translate(502.5,605) scale(0.863,1)" fill="#ff9900">69</text>
<rect class="k" x="344" y="598" width="12" height="13"/><text transform="translate(344.5,609) scale(0.863,1)" fill="#ff0000">87</text>
<rect class="k" x="368" y="602" width="12" height="13"/><text transform="translate(368.5,613) scale(0.863,1)" fill="#ff0066">96</text>
<rect class="k" x="533" y="600" width="12" height="13"/><text transform="translate(533.5,611) scale(0.863,1)" fill="#ff9900">74</text>
<rect class="k" x="427" y="603" width="12" height="13"/><text transform="translate(427.5,614) scale(0.863,1)" fill="#ffff00">58</text>
<rect class="k" x="396" y="611" width="12" height="13"/><text transform="translate(396.5,622) scale(0.863,1)" fill="#ff0000">81</text>
<rect class="k" x="601" y="611" width="12" height="13"/><text transform="translate(601.5,622) scale(0.863,1)" fill="#ff9900">72</text>
<rect class="k" x="489" y="615" width="12" height="13"/><text transform="translate(489.5,626) scale(0.863,1)" fill="#ff0000">87</text>
<rect class="k" x="398" y="624" width="12" height="13"/><text transform="translate(398.5,635) scale(0.863,1)" fill="#ff0000">84</text>
<rect class="k" x="519" y="622" width="12" height="13"/><text transform="translate(519.5,633) scale(0.863,1)" fill="#ff0000">83</text>
<rect class="k" x="539" y="622" width="12" height="13"/><text transform="translate(539.5,633) scale(0.863,1)" fill="#ff0000">83</text>
<rect class="k" x="437" y="626" width="12" height="13"/><text transform="translate(437.5,637) scale(0.863,1)" fill="#ff0066">96</text>
<rect class="k" x="600" y="627" width="12" height="13"/><text transform="translate(600.5,638) scale(0.863,1)" fill="#ff0000">80</text>
<rect class="k" x="337" y="631" width="12" height="13"/><text transform="translate(337.5,642) scale(0.863,1)" fill="#ff0066">89</text>
<rect class="k" x="649" y="636" width="12" height="13"/><text transform="translate(649.5,647) scale(0.863,1)" fill="#ff9900">73</text>
<rect class="k" x="654" y="645" width="12" height="13"/><text transform="translate(654.5,656) scale(0.863,1)" fill="#ffff66">47</text>
<rect class="k" x="640" y="654" width="12" height="13"/><text transform="translate(640.5,665) scale(0.863,1)" fill="#ffff00">56</text>
<rect class="k" x="349" y="646" width="12" height="13"/><text transform="translate(349.5,657) scale(0.863,1)" fill="#ff0000">84</text>
<rect class="k" x="441" y="647" width="12" height="13"/><text transform="translate(441.5,658) scale(0.863,1)" fill="#ff9900">72</text>
<rect class="k" x="462" y="642" width="12" height="13"/><text transform="translate(462.5,653) scale(0.863,1)" fill="#ff9900">74</text>
<rect class="k" x="502" y="648" width="12" height="13"/><text transform="translate(502.5,659) scale(0.863,1)" fill="#ff0000">81</text>
<rect class="k" x="414" y="651" width="12" height="13"/><text transform="translate(414.5,662) scale(0.863,1)" fill="#ff0000">83</text>
<rect class="k" x="556" y="655" width="12" height="13"/><text transform="translate(556.5,666) scale(0.863,1)" fill="#ff9900">73</text>
<rect class="k" x="598" y="661" width="12" height="13"/><text transform="translate(598.5,672) scale(0.863,1)" fill="#ff9900">63</text>
<rect class="k" x="385" y="670" width="12" height="13"/><text transform="translate(385.5,681) scale(0.863,1)" fill="#ff0066">89</text>
<rect class="k" x="374" y="663" width="12" height="13"/><text transform="translate(374.5,674) scale(0.863,1)" fill="#ff0000">82</text>
<rect class="k" x="440" y="667" width="12" height="13"/><text transform="translate(440.5,678) scale(0.863,1)" fill="#ff0000">83</text>
<rect class="k" x="499" y="670" width="12" height="13"/><text transform="translate(499.5,681) scale(0.863,1)" fill="#ff0000">79</text>
<rect class="k" x="501" y="680" width="12" height="13"/><text transform="translate(501.5,691) scale(0.863,1)" fill="#ff0000">83</text>
<rect class="k" x="539" y="672" width="12" height="13"/><text transform="translate(539.5,683) scale(0.863,1)" fill="#ff0000">81</text>
<rect class="k" x="370" y="677" width="12" height="13"/><text transform="translate(370.5,688) scale(0.863,1)" fill="#ff0066">95</text><rect x="370" y="689" width="12" height="1" fill="#ff0066"/>
<rect class="k" x="668" y="677" width="12" height="13"/><text transform="translate(668.5,688) scale(0.863,1)" fill="#ff9900">68</text>
<rect class="k" x="455" y="689" width="12" height="13"/><text transform="translate(455.5,700) scale(0.863,1)" fill="#ff9900">75</text>
<rect class="k" x="523" y="687" width="12" height="13"/><text transform="translate(523.5,698) scale(0.863,1)" fill="#ff9900">70</text>
<rect class="k" x="516" y="698" width="12" height="13"/><text transform="translate(516.5,709) scale(0.863,1)" fill="#ff9900">63</text>
<rect class="k" x="578" y="691" width="12" height="13"/><text transform="translate(578.5,702) scale(0.863,1)" fill="#ff9900">64</text>
<rect class="k" x="614" y="691" width="12" height="13"/><text transform="translate(614.5,702) scale(0.863,1)" fill="#ffff66">44</text>
<rect class="k" x="600" y="698" width="12" height="13"/><text transform="translate(600.5,709) scale(0.863,1)" fill="#ffff66">50</text>
<rect class="k" x="586" y="703" width="12" height="13"/><text transform="translate(586.5,714) scale(0.863,1)" fill="#ffff00">53</text>
<rect class="k" x="669" y="703" width="18" height="13"/><text transform="translate(669.5,714) scale(0.863,1)" fill="#aa00aa">104</text><rect x="669" y="715" width="18" height="1" fill="#aa00aa"/>
<rect class="k" x="391" y="704" width="12" height="13"/><text transform="translate(391.5,715) scale(0.863,1)" fill="#ff9900">70</text>
<rect class="k" x="423" y="704" width="12" height="13"/><text transform="translate(423.5,715) scale(0.863,1)" fill="#ff0000">76</text>
<rect class="k" x="448" y="705" width="12" height="13"/><text transform="translate(448.5,716) scale(0.863,1)" fill="#ff9900">67</text>
<rect class="k" x="507" y="705" width="12" height="13"/><text transform="translate(507.5,716) scale(0.863,1)" fill="#ff0000">86</text><rect x="507" y="717" width="12" height="1" fill="#ff0000"/>
<rect class="k" x="466" y="712" width="12" height="13"/><text transform="translate(466.5,723) scale(0.863,1)" fill="#ff9900">66</text>
<rect class="k" x="337" y="715" width="12" height="13"/><text transform="translate(337.5,726) scale(0.863,1)" fill="#ff0066">99</text>
<rect class="k" x="359" y="716" width="18" height="13"/><text transform="translate(359.5,727) scale(0.863,1)" fill="#aa00aa">104</text>
<rect class="k" x="386" y="719" width="12" height="13"/><text transform="translate(386.5,730) scale(0.863,1)" fill="#ff0066">90</text>
<rect class="k" x="414" y="719" width="12" height="13"/><text transform="translate(414.5,730) scale(0.863,1)" fill="#ff9900">66</text>
<rect class="k" x="336" y="723" width="12" height="13"/><text transform="translate(336.5,734) scale(0.863,1)" fill="#ff9900">72</text>
<rect class="k" x="495" y="721" width="12" height="13"/><text transform="translate(495.5,732) scale(0.863,1)" fill="#ffff66">48</text>
<rect class="k" x="426" y="728" width="12" height="13"/><text transform="translate(426.5,739) scale(0.863,1)" fill="#ffff66">46</text>
<rect class="k" x="357" y="733" width="12" height="13"/><text transform="translate(357.5,744) scale(0.863,1)" fill="#ff0000">76</text>
<rect class="k" x="379" y="734" width="12" height="13"/><text transform="translate(379.5,745) scale(0.863,1)" fill="#ffff00">59</text>
<rect class="k" x="409" y="738" width="12" height="13"/><text transform="translate(409.5,749) scale(0.863,1)" fill="#ff9900">65</text>
<rect class="k" x="422" y="742" width="12" height="13"/><text transform="translate(422.5,753) scale(0.863,1)" fill="#ff9900">66</text>
<rect class="k" x="358" y="744" width="12" height="13"/><text transform="translate(358.5,755) scale(0.863,1)" fill="#ff9900">67</text>
<rect class="k" x="377" y="745" width="18" height="13"/><text transform="translate(377.5,756) scale(0.863,1)" fill="#aa00aa">112</text><rect x="377" y="757" width="18" height="1" fill="#aa00aa"/>
<rect class="k" x="502" y="739" width="18" height="13"/><text transform="translate(502.5,750) scale(0.863,1)" fill="#ff00ff">125</text><rect x="502" y="751" width="18" height="1" fill="#ff00ff"/>
<rect class="k" x="522" y="738" width="12" height="13"/><text transform="translate(522.5,749) scale(0.863,1)" fill="#ffffff">38</text>
<rect class="k" x="340" y="754" width="12" height="13"/><text transform="translate(340.5,765) scale(0.863,1)" fill="#ffff66">50</text>
<rect class="k" x="366" y="755" width="12" height="13"/><text transform="translate(366.5,766) scale(0.863,1)" fill="#ff9900">72</text>
<rect class="k" x="392" y="752" width="12" height="13"/><text transform="translate(392.5,763) scale(0.863,1)" fill="#ffff66">50</text>
<rect class="k" x="403" y="754" width="18" height="13"/><text transform="translate(403.5,765) scale(0.863,1)" fill="#aa00aa">102</text>
<rect class="k" x="578" y="754" width="12" height="13"/><text transform="translate(578.5,765) scale(0.863,1)" fill="#ff9900">65</text>
<rect class="k" x="535" y="755" width="12" height="13"/><text transform="translate(535.5,766) scale(0.863,1)" fill="#ff0000">79</text>
<rect class="k" x="773" y="507" width="12" height="13"/><text transform="translate(773.5,518) scale(0.863,1)" fill="#ffff00">58</text>
<rect class="k" x="812" y="527" width="12" height="13"/><text transform="translate(812.5,538) scale(0.863,1)" fill="#ffff00">58</text>
<rect class="k" x="796" y="541" width="12" height="13"/><text transform="translate(796.5,552) scale(0.863,1)" fill="#ffff00">54</text>
<rect class="k" x="755" y="542" width="12" height="13"/><text transform="translate(755.5,553) scale(0.863,1)" fill="#ff9900">68</text>
<rect class="k" x="868" y="535" width="12" height="13"/><text transform="translate(868.5,546) scale(0.863,1)" fill="#ffff00">54</text>
<rect class="k" x="879" y="553" width="12" height="13"/><text transform="translate(879.5,564) scale(0.863,1)" fill="#ffffff">40</text>
<rect class="k" x="906" y="565" width="12" height="13"/><text transform="translate(906.5,576) scale(0.863,1)" fill="#ffff66">50</text>
<rect class="k" x="904" y="522" width="12" height="13"/><text transform="translate(904.5,533) scale(0.863,1)" fill="#ff0000">76</text>
<rect class="k" x="939" y="531" width="12" height="13"/><text transform="translate(939.5,542) scale(0.863,1)" fill="#ffff00">54</text>
<rect class="k" x="993" y="520" width="12" height="13"/><text transform="translate(993.5,531) scale(0.863,1)" fill="#ff9900">72</text>
<rect class="k" x="959" y="544" width="12" height="13"/><text transform="translate(959.5,555) scale(0.863,1)" fill="#ff9900">72</text><rect x="959" y="556" width="12" height="1" fill="#ff9900"/>
<rect class="k" x="679" y="551" width="12" height="13"/><text transform="translate(679.5,562) scale(0.863,1)" fill="#ff0000">86</text>
<rect class="k" x="710" y="577" width="12" height="13"/><text transform="translate(710.5,588) scale(0.863,1)" fill="#ff0000">83</text>
<rect class="k" x="776" y="580" width="12" height="13"/><text transform="translate(776.5,591) scale(0.863,1)" fill="#ffff00">61</text>
<rect class="k" x="818" y="586" width="12" height="13"/><text transform="translate(818.5,597) scale(0.863,1)" fill="#ffff00">58</text>
<rect class="k" x="718" y="600" width="12" height="13"/><text transform="translate(718.5,611) scale(0.863,1)" fill="#ff0000">76</text>
<rect class="k" x="752" y="600" width="12" height="13"/><text transform="translate(752.5,611) scale(0.863,1)" fill="#ff9900">65</text>
<rect class="k" x="816" y="606" width="12" height="13"/><text transform="translate(816.5,617) scale(0.863,1)" fill="#ffff66">47</text>
<rect class="k" x="744" y="623" width="12" height="13"/><text transform="translate(744.5,634) scale(0.863,1)" fill="#ff0000">76</text>
<rect class="k" x="772" y="624" width="12" height="13"/><text transform="translate(772.5,635) scale(0.863,1)" fill="#ff9900">65</text>
<rect class="k" x="688" y="635" width="12" height="13"/><text transform="translate(688.5,646) scale(0.863,1)" fill="#ffff00">61</text>
<rect class="k" x="833" y="636" width="12" height="13"/><text transform="translate(833.5,647) scale(0.863,1)" fill="#ffff66">50</text>
<rect class="k" x="750" y="651" width="12" height="13"/><text transform="translate(750.5,662) scale(0.863,1)" fill="#ffff66">47</text>
<rect class="k" x="770" y="657" width="12" height="13"/><text transform="translate(770.5,668) scale(0.863,1)" fill="#ff0000">79</text>
<rect class="k" x="700" y="666" width="12" height="13"/><text transform="translate(700.5,677) scale(0.863,1)" fill="#ffff66">47</text>
<rect class="k" x="845" y="669" width="12" height="13"/><text transform="translate(845.5,680) scale(0.863,1)" fill="#ffff66">50</text>
<rect class="k" x="813" y="703" width="12" height="13"/><text transform="translate(813.5,714) scale(0.863,1)" fill="#ffff66">50</text>
<rect class="k" x="796" y="712" width="12" height="13"/><text transform="translate(796.5,723) scale(0.863,1)" fill="#ffff00">61</text><rect x="796" y="724" width="12" height="1" fill="#ffff00"/>
</g>
<rect x="0" y="0" width="426" height="12" fill="#fff"/>
<g fill="#000"><text transform="translate(-1.5,10) scale(0.768,1)">FRE</text><text transform="translate(23.2,10) scale(0.844,1)">24.02.17</text><text transform="translate(67.7,10) scale(0.860,1)">00:00</text><text transform="translate(97.8,10) scale(0.825,1)">UTC</text><text transform="translate(126.2,10) scale(0.836,1)">Bodenwettermeldungen</text><text transform="translate(241.5,10) scale(0.900,1)">:</text><text transform="translate(250.0,10) scale(0.828,1)">Max.Böen(im</text><text transform="translate(314.5,10) scale(0.805,1)">Bezugszeitraum)</text><text transform="translate(395.7,10) scale(0.900,1)">/</text><text transform="translate(402.0,10) scale(0.893,1)">km/h</text></g>
</svg>

</body></html>
